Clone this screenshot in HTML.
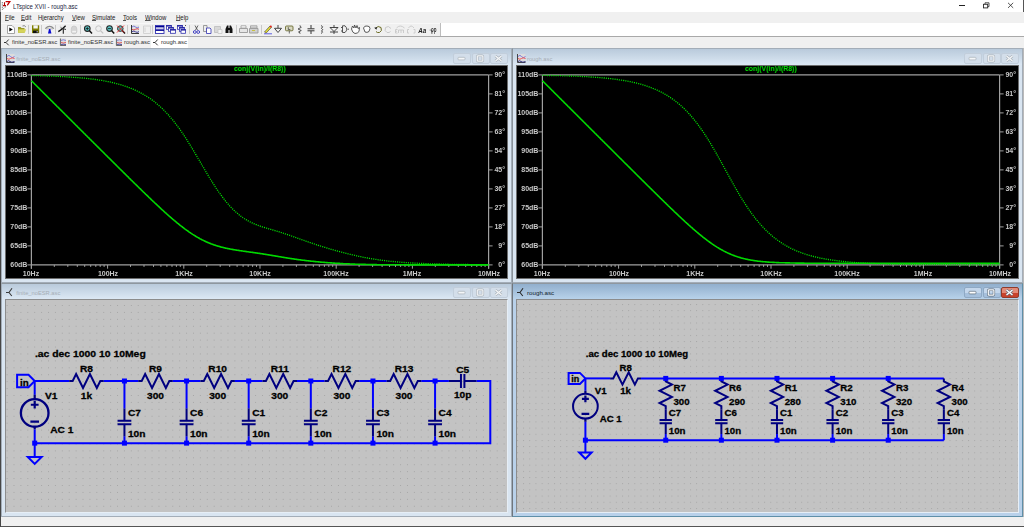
<!DOCTYPE html>
<html><head><meta charset="utf-8">
<style>
*{margin:0;padding:0;box-sizing:border-box}
html,body{width:1024px;height:527px;overflow:hidden;background:#f0f0f0;font-family:"Liberation Sans",sans-serif}
.a{position:absolute}
#title{left:0;top:0;width:1024px;height:12px;background:#fff}
#title .t{left:12.7px;top:1.5px;font-size:6.9px;color:#1a1a40;line-height:9px;white-space:nowrap;transform:scaleX(0.87);transform-origin:0 0}
#menu{left:0;top:12px;width:1024px;height:11px;background:#f0f0f0}
#menu u{text-decoration-thickness:0.6px;text-underline-offset:0.4px;text-decoration-color:#555}
#menu span{position:absolute;top:1px;font-size:7.5px;line-height:9px;color:#202020;transform:scaleX(0.8);transform-origin:0 0}
.tab{position:absolute;top:38px;font-size:5.9px;line-height:9px;color:#303030;white-space:nowrap}
.child{position:absolute;background:#d9e5f1;border:1px solid #a3adb8}
.ttl{position:absolute;background:linear-gradient(#b9cadb,#dce8f4)}
.act{background:#b9d1ea;border-color:#5f8fa8}
.act .ttl{background:linear-gradient(#91afcd,#b8d2ea)}
.ct{position:absolute;font-size:5.75px;line-height:8px;white-space:nowrap;color:#a6adb5}
.act .ct{color:#101c2c;font-size:6.2px}
.btn{position:absolute;width:18px;height:11px;border:1px solid #c2cedb;border-radius:2px;background:#d3deea}
.abtn{border-color:#8fa9c4;background:linear-gradient(#c4d7ec 50%,#a6c0dc 50%)}
.cbtn{border-color:#8e3b2c;background:linear-gradient(#e28a78 50%,#c8432d 50%)}
.plot{position:absolute;background:#000;border:1px solid #6c6c6c}
.sch{position:absolute;background:#c3c3c3;border:1px solid #8c8c8c;border-right-color:#e6eef6;border-bottom-color:#e6eef6}
.yl,.yr,.xl{will-change:transform;position:absolute;font-size:7px;line-height:10px;color:#c8c8c8;font-weight:bold;white-space:nowrap}
.yl,.yr{text-align:right}
.xl{width:40px;text-align:center}
.ov{position:absolute;left:0;top:0}
</style></head><body>
<div id="title" class="a">
 <svg class="a" style="left:0;top:0" width="12" height="12" viewBox="0 0 12 12"><path d="M2.3,2.3 V9.5 L7.5,5.3" stroke="#333" stroke-width="0.9" stroke-dasharray="1 1.2" fill="none"/><path d="M4.5,2.3 V5.6 M3,5.6 H6" stroke="#b00000" stroke-width="1.1" fill="none"/><path d="M5.6,1.6 H9.8 L7.4,5.2" stroke="#c00000" stroke-width="1.3" fill="none"/></svg>
 <div class="a t">LTspice XVII - rough.asc</div>
 <div class="a" style="left:959px;top:5px;width:6px;height:1px;background:#222"></div>
 <svg class="a" style="left:980px;top:0" width="12" height="12" viewBox="0 0 12 12"><rect x="3.5" y="4.3" width="4.2" height="3.6" fill="none" stroke="#2a2a2a" stroke-width="0.9"/><path d="M5,4.2 V2.8 H9 V6.6 H7.8" fill="none" stroke="#2a2a2a" stroke-width="0.8"/></svg>
 <svg class="a" style="left:1006px;top:1px" width="9" height="9" viewBox="0 0 9 9"><path d="M2,1.8 L7.2,6.9 M7.2,1.8 L2,6.9" stroke="#2a2a2a" stroke-width="0.8"/></svg>
</div>
<div id="menu" class="a">
 <span style="left:4.5px"><u>F</u>ile</span><span style="left:20.5px"><u>E</u>dit</span><span style="left:38px">H<u>i</u>erarchy</span><span style="left:72px"><u>V</u>iew</span><span style="left:92px"><u>S</u>imulate</span><span style="left:123px"><u>T</u>ools</span><span style="left:144.5px"><u>W</u>indow</span><span style="left:176px"><u>H</u>elp</span>
</div>
<div class="a" style="left:0;top:23px;width:441px;height:13px;background:#f0f0f0;border-top:1px solid #f8f8f8"></div>
<div class="a" style="left:441px;top:23px;width:583px;height:13px;background:#fff"></div>
<div class="a" style="left:0;top:36px;width:1024px;height:1px;background:#a9a9a9"></div>
<div class="a" style="left:0;top:37px;width:1024px;height:11px;background:#f0f0f0"></div>
<div class="a" style="left:151px;top:37px;width:37px;height:11px;background:#fff"></div>
<div class="tab" style="left:12px">finite_noESR.asc</div>
<div class="tab" style="left:68px">finite_noESR.asc</div>
<div class="tab" style="left:124px">rough.asc</div>
<div class="tab" style="left:161px">rough.asc</div>
<div class="a" style="left:0;top:48px;width:1024px;height:1px;background:#a8a8a8"></div>
<!-- MDI children -->
<div class="child" style="left:1px;top:48px;width:511px;height:235px">
 <div class="ttl" style="left:0;top:0;width:509px;height:16px"></div>
 <div class="ct" style="left:14.2px;top:6px">finite_noESR.asc</div>
 <div class="btn" style="left:451px;top:4px"></div><div class="btn" style="left:470px;top:4px"></div><div class="btn" style="left:488px;top:4px"></div>
</div>
<div class="plot" style="left:5px;top:65px;width:503px;height:214px"></div>
<div class="child" style="left:512px;top:48px;width:511px;height:235px;border-left-color:#8a9299">
 <div class="ttl" style="left:0;top:0;width:509px;height:16px"></div>
 <div class="ct" style="left:14px;top:6px">rough.asc</div>
 <div class="btn" style="left:451px;top:4px"></div><div class="btn" style="left:470px;top:4px"></div><div class="btn" style="left:488px;top:4px"></div>
</div>
<div class="plot" style="left:516px;top:65px;width:503px;height:214px"></div>
<div class="child" style="left:1px;top:283px;width:511px;height:234px;border-top-color:#8e979f">
 <div class="ttl" style="left:0;top:0;width:509px;height:15px"></div>
 <div class="ct" style="left:14.2px;top:5px">finite_noESR.asc</div>
 <div class="btn" style="left:451px;top:3px"></div><div class="btn" style="left:470px;top:3px"></div><div class="btn" style="left:488px;top:3px"></div>
</div>
<div class="sch" style="left:5px;top:299px;width:503px;height:214px"></div>
<div class="child act" style="left:512px;top:283px;width:511px;height:234px;border-left-color:#6f767d;border-top-color:#8e979f">
 <div class="ttl" style="left:0;top:0;width:509px;height:15px"></div>
 <div class="ct" style="left:14px;top:5px">rough.asc</div>
 <div class="btn abtn" style="left:451px;top:3px"></div><div class="btn abtn" style="left:470px;top:3px"></div><div class="btn cbtn" style="left:488px;top:3px"></div>
</div>
<div class="sch" style="left:516px;top:299px;width:503px;height:214px"></div>
<div class="a" style="left:1023px;top:48px;width:1px;height:469px;background:#bababa"></div>
<div class="a" style="left:0;top:517px;width:1024px;height:9px;background:#f0f0f0"></div>
<div class="a" style="left:0;top:526px;width:1024px;height:1px;background:#555"></div>
<div class="a" style="left:0;top:0;width:1px;height:527px;background:#464646"></div>
<div class="a" style="left:1023px;top:0;width:1px;height:12px;background:#555"></div>
<div class="a" style="left:0;top:0;width:1px;height:12px;background:#a0a0a0"></div>
<svg class="ov" width="1024" height="527" viewBox="0 0 1024 527">
<defs>
<pattern id="g1" x="34.20" y="381.15" width="6.903" height="6.923" patternUnits="userSpaceOnUse"><rect x="0" y="0" width="1" height="1" fill="#a6a6a6"/></pattern>
<pattern id="g2" x="584.90" y="378.16" width="6.18" height="6.18" patternUnits="userSpaceOnUse"><rect x="0" y="0" width="1" height="1" fill="#a6a6a6"/></pattern>
<clipPath id="c1"><rect x="6" y="66" width="501" height="212"/></clipPath>
<clipPath id="c2"><rect x="517" y="66" width="501" height="212"/></clipPath>
<clipPath id="c3"><rect x="6" y="300" width="501" height="212"/></clipPath>
<clipPath id="c4"><rect x="517" y="300" width="501" height="212"/></clipPath>
</defs>
<g clip-path="url(#c1)"><path d="M31.4,74.9 H488.6 M31.4,74.9 V268.7 M488.6,74.9 V268.7 M31.4,264.9 H488.6" stroke="#a0a0a0" stroke-width="1.2" fill="none"/>
<path d="M27.4,74.9 H31.4 M488.6,74.9 H492.6" stroke="#a0a0a0" stroke-width="1"/>
<path d="M27.4,93.9 H31.4 M488.6,93.9 H492.6" stroke="#a0a0a0" stroke-width="1"/>
<path d="M27.4,112.9 H31.4 M488.6,112.9 H492.6" stroke="#a0a0a0" stroke-width="1"/>
<path d="M27.4,131.9 H31.4 M488.6,131.9 H492.6" stroke="#a0a0a0" stroke-width="1"/>
<path d="M27.4,150.9 H31.4 M488.6,150.9 H492.6" stroke="#a0a0a0" stroke-width="1"/>
<path d="M27.4,169.9 H31.4 M488.6,169.9 H492.6" stroke="#a0a0a0" stroke-width="1"/>
<path d="M27.4,188.9 H31.4 M488.6,188.9 H492.6" stroke="#a0a0a0" stroke-width="1"/>
<path d="M27.4,207.9 H31.4 M488.6,207.9 H492.6" stroke="#a0a0a0" stroke-width="1"/>
<path d="M27.4,226.9 H31.4 M488.6,226.9 H492.6" stroke="#a0a0a0" stroke-width="1"/>
<path d="M27.4,245.9 H31.4 M488.6,245.9 H492.6" stroke="#a0a0a0" stroke-width="1"/>
<path d="M27.4,264.9 H31.4 M488.6,264.9 H492.6" stroke="#a0a0a0" stroke-width="1"/>
<path d="M54.3,264.9 V266.9" stroke="#a0a0a0" stroke-width="1"/>
<path d="M67.8,264.9 V266.9" stroke="#a0a0a0" stroke-width="1"/>
<path d="M77.3,264.9 V266.9" stroke="#a0a0a0" stroke-width="1"/>
<path d="M84.7,264.9 V266.9" stroke="#a0a0a0" stroke-width="1"/>
<path d="M90.7,264.9 V266.9" stroke="#a0a0a0" stroke-width="1"/>
<path d="M95.8,264.9 V266.9" stroke="#a0a0a0" stroke-width="1"/>
<path d="M100.2,264.9 V266.9" stroke="#a0a0a0" stroke-width="1"/>
<path d="M104.1,264.9 V266.9" stroke="#a0a0a0" stroke-width="1"/>
<path d="M130.5,264.9 V266.9" stroke="#a0a0a0" stroke-width="1"/>
<path d="M144.0,264.9 V266.9" stroke="#a0a0a0" stroke-width="1"/>
<path d="M153.5,264.9 V266.9" stroke="#a0a0a0" stroke-width="1"/>
<path d="M160.9,264.9 V266.9" stroke="#a0a0a0" stroke-width="1"/>
<path d="M166.9,264.9 V266.9" stroke="#a0a0a0" stroke-width="1"/>
<path d="M172.0,264.9 V266.9" stroke="#a0a0a0" stroke-width="1"/>
<path d="M176.4,264.9 V266.9" stroke="#a0a0a0" stroke-width="1"/>
<path d="M180.3,264.9 V266.9" stroke="#a0a0a0" stroke-width="1"/>
<path d="M206.7,264.9 V266.9" stroke="#a0a0a0" stroke-width="1"/>
<path d="M220.2,264.9 V266.9" stroke="#a0a0a0" stroke-width="1"/>
<path d="M229.7,264.9 V266.9" stroke="#a0a0a0" stroke-width="1"/>
<path d="M237.1,264.9 V266.9" stroke="#a0a0a0" stroke-width="1"/>
<path d="M243.1,264.9 V266.9" stroke="#a0a0a0" stroke-width="1"/>
<path d="M248.2,264.9 V266.9" stroke="#a0a0a0" stroke-width="1"/>
<path d="M252.6,264.9 V266.9" stroke="#a0a0a0" stroke-width="1"/>
<path d="M256.5,264.9 V266.9" stroke="#a0a0a0" stroke-width="1"/>
<path d="M282.9,264.9 V266.9" stroke="#a0a0a0" stroke-width="1"/>
<path d="M296.4,264.9 V266.9" stroke="#a0a0a0" stroke-width="1"/>
<path d="M305.9,264.9 V266.9" stroke="#a0a0a0" stroke-width="1"/>
<path d="M313.3,264.9 V266.9" stroke="#a0a0a0" stroke-width="1"/>
<path d="M319.3,264.9 V266.9" stroke="#a0a0a0" stroke-width="1"/>
<path d="M324.4,264.9 V266.9" stroke="#a0a0a0" stroke-width="1"/>
<path d="M328.8,264.9 V266.9" stroke="#a0a0a0" stroke-width="1"/>
<path d="M332.7,264.9 V266.9" stroke="#a0a0a0" stroke-width="1"/>
<path d="M359.1,264.9 V266.9" stroke="#a0a0a0" stroke-width="1"/>
<path d="M372.6,264.9 V266.9" stroke="#a0a0a0" stroke-width="1"/>
<path d="M382.1,264.9 V266.9" stroke="#a0a0a0" stroke-width="1"/>
<path d="M389.5,264.9 V266.9" stroke="#a0a0a0" stroke-width="1"/>
<path d="M395.5,264.9 V266.9" stroke="#a0a0a0" stroke-width="1"/>
<path d="M400.6,264.9 V266.9" stroke="#a0a0a0" stroke-width="1"/>
<path d="M405.0,264.9 V266.9" stroke="#a0a0a0" stroke-width="1"/>
<path d="M408.9,264.9 V266.9" stroke="#a0a0a0" stroke-width="1"/>
<path d="M435.3,264.9 V266.9" stroke="#a0a0a0" stroke-width="1"/>
<path d="M448.8,264.9 V266.9" stroke="#a0a0a0" stroke-width="1"/>
<path d="M458.3,264.9 V266.9" stroke="#a0a0a0" stroke-width="1"/>
<path d="M465.7,264.9 V266.9" stroke="#a0a0a0" stroke-width="1"/>
<path d="M471.7,264.9 V266.9" stroke="#a0a0a0" stroke-width="1"/>
<path d="M476.8,264.9 V266.9" stroke="#a0a0a0" stroke-width="1"/>
<path d="M481.2,264.9 V266.9" stroke="#a0a0a0" stroke-width="1"/>
<path d="M485.1,264.9 V266.9" stroke="#a0a0a0" stroke-width="1"/>
<path d="M31.4,264.9 V268.7" stroke="#a0a0a0" stroke-width="1"/>
<path d="M107.6,264.9 V268.7" stroke="#a0a0a0" stroke-width="1"/>
<path d="M183.8,264.9 V268.7" stroke="#a0a0a0" stroke-width="1"/>
<path d="M260.0,264.9 V268.7" stroke="#a0a0a0" stroke-width="1"/>
<path d="M336.2,264.9 V268.7" stroke="#a0a0a0" stroke-width="1"/>
<path d="M412.4,264.9 V268.7" stroke="#a0a0a0" stroke-width="1"/>
<path d="M488.6,264.9 V268.7" stroke="#a0a0a0" stroke-width="1"/>
<polyline points="31.4,80.7 31.8,81.1 32.2,81.5 32.5,81.8 32.9,82.2 33.3,82.6 33.7,83.0 34.1,83.4 34.5,83.7 34.8,84.1 35.2,84.5 35.6,84.9 36.0,85.3 36.4,85.7 36.7,86.0 37.1,86.4 37.5,86.8 37.9,87.2 38.3,87.6 38.6,87.9 39.0,88.3 39.4,88.7 39.8,89.1 40.2,89.5 40.6,89.8 40.9,90.2 41.3,90.6 41.7,91.0 42.1,91.4 42.5,91.7 42.8,92.1 43.2,92.5 43.6,92.9 44.0,93.3 44.4,93.6 44.7,94.0 45.1,94.4 45.5,94.8 45.9,95.2 46.3,95.5 46.7,95.9 47.0,96.3 47.4,96.7 47.8,97.1 48.2,97.4 48.6,97.8 48.9,98.2 49.3,98.6 49.7,99.0 50.1,99.3 50.5,99.7 50.8,100.1 51.2,100.5 51.6,100.9 52.0,101.2 52.4,101.6 52.8,102.0 53.1,102.4 53.5,102.8 53.9,103.1 54.3,103.5 54.7,103.9 55.0,104.3 55.4,104.7 55.8,105.0 56.2,105.4 56.6,105.8 56.9,106.2 57.3,106.6 57.7,106.9 58.1,107.3 58.5,107.7 58.9,108.1 59.2,108.5 59.6,108.8 60.0,109.2 60.4,109.6 60.8,110.0 61.1,110.4 61.5,110.7 61.9,111.1 62.3,111.5 62.7,111.9 63.0,112.3 63.4,112.6 63.8,113.0 64.2,113.4 64.6,113.8 65.0,114.2 65.3,114.6 65.7,114.9 66.1,115.3 66.5,115.7 66.9,116.1 67.2,116.5 67.6,116.8 68.0,117.2 68.4,117.6 68.8,118.0 69.2,118.4 69.5,118.7 69.9,119.1 70.3,119.5 70.7,119.9 71.1,120.3 71.4,120.6 71.8,121.0 72.2,121.4 72.6,121.8 73.0,122.2 73.3,122.5 73.7,122.9 74.1,123.3 74.5,123.7 74.9,124.1 75.3,124.4 75.6,124.8 76.0,125.2 76.4,125.6 76.8,126.0 77.2,126.3 77.5,126.7 77.9,127.1 78.3,127.5 78.7,127.9 79.1,128.2 79.4,128.6 79.8,129.0 80.2,129.4 80.6,129.8 81.0,130.1 81.4,130.5 81.7,130.9 82.1,131.3 82.5,131.7 82.9,132.0 83.3,132.4 83.6,132.8 84.0,133.2 84.4,133.6 84.8,133.9 85.2,134.3 85.5,134.7 85.9,135.1 86.3,135.5 86.7,135.8 87.1,136.2 87.5,136.6 87.8,137.0 88.2,137.4 88.6,137.7 89.0,138.1 89.4,138.5 89.7,138.9 90.1,139.3 90.5,139.6 90.9,140.0 91.3,140.4 91.6,140.8 92.0,141.2 92.4,141.5 92.8,141.9 93.2,142.3 93.6,142.7 93.9,143.1 94.3,143.4 94.7,143.8 95.1,144.2 95.5,144.6 95.8,145.0 96.2,145.3 96.6,145.7 97.0,146.1 97.4,146.5 97.7,146.9 98.1,147.2 98.5,147.6 98.9,148.0 99.3,148.4 99.7,148.8 100.0,149.1 100.4,149.5 100.8,149.9 101.2,150.3 101.6,150.6 101.9,151.0 102.3,151.4 102.7,151.8 103.1,152.2 103.5,152.5 103.9,152.9 104.2,153.3 104.6,153.7 105.0,154.1 105.4,154.4 105.8,154.8 106.1,155.2 106.5,155.6 106.9,156.0 107.3,156.3 107.7,156.7 108.0,157.1 108.4,157.5 108.8,157.9 109.2,158.2 109.6,158.6 110.0,159.0 110.3,159.4 110.7,159.7 111.1,160.1 111.5,160.5 111.9,160.9 112.2,161.3 112.6,161.6 113.0,162.0 113.4,162.4 113.8,162.8 114.1,163.2 114.5,163.5 114.9,163.9 115.3,164.3 115.7,164.7 116.1,165.0 116.4,165.4 116.8,165.8 117.2,166.2 117.6,166.6 118.0,166.9 118.3,167.3 118.7,167.7 119.1,168.1 119.5,168.5 119.9,168.8 120.2,169.2 120.6,169.6 121.0,170.0 121.4,170.3 121.8,170.7 122.2,171.1 122.5,171.5 122.9,171.8 123.3,172.2 123.7,172.6 124.1,173.0 124.4,173.4 124.8,173.7 125.2,174.1 125.6,174.5 126.0,174.9 126.3,175.2 126.7,175.6 127.1,176.0 127.5,176.4 127.9,176.7 128.3,177.1 128.6,177.5 129.0,177.9 129.4,178.3 129.8,178.6 130.2,179.0 130.5,179.4 130.9,179.8 131.3,180.1 131.7,180.5 132.1,180.9 132.4,181.3 132.8,181.6 133.2,182.0 133.6,182.4 134.0,182.8 134.4,183.1 134.7,183.5 135.1,183.9 135.5,184.2 135.9,184.6 136.3,185.0 136.6,185.4 137.0,185.7 137.4,186.1 137.8,186.5 138.2,186.9 138.6,187.2 138.9,187.6 139.3,188.0 139.7,188.4 140.1,188.7 140.5,189.1 140.8,189.5 141.2,189.8 141.6,190.2 142.0,190.6 142.4,191.0 142.7,191.3 143.1,191.7 143.5,192.1 143.9,192.4 144.3,192.8 144.7,193.2 145.0,193.5 145.4,193.9 145.8,194.3 146.2,194.6 146.6,195.0 146.9,195.4 147.3,195.7 147.7,196.1 148.1,196.5 148.5,196.8 148.8,197.2 149.2,197.6 149.6,197.9 150.0,198.3 150.4,198.7 150.8,199.0 151.1,199.4 151.5,199.8 151.9,200.1 152.3,200.5 152.7,200.9 153.0,201.2 153.4,201.6 153.8,201.9 154.2,202.3 154.6,202.7 154.9,203.0 155.3,203.4 155.7,203.7 156.1,204.1 156.5,204.5 156.9,204.8 157.2,205.2 157.6,205.5 158.0,205.9 158.4,206.2 158.8,206.6 159.1,207.0 159.5,207.3 159.9,207.7 160.3,208.0 160.7,208.4 161.0,208.7 161.4,209.1 161.8,209.4 162.2,209.8 162.6,210.1 163.0,210.5 163.3,210.8 163.7,211.2 164.1,211.5 164.5,211.9 164.9,212.2 165.2,212.6 165.6,212.9 166.0,213.2 166.4,213.6 166.8,213.9 167.1,214.3 167.5,214.6 167.9,214.9 168.3,215.3 168.7,215.6 169.1,216.0 169.4,216.3 169.8,216.6 170.2,217.0 170.6,217.3 171.0,217.6 171.3,218.0 171.7,218.3 172.1,218.6 172.5,218.9 172.9,219.3 173.3,219.6 173.6,219.9 174.0,220.2 174.4,220.6 174.8,220.9 175.2,221.2 175.5,221.5 175.9,221.8 176.3,222.2 176.7,222.5 177.1,222.8 177.4,223.1 177.8,223.4 178.2,223.7 178.6,224.0 179.0,224.3 179.4,224.6 179.7,224.9 180.1,225.3 180.5,225.6 180.9,225.9 181.3,226.2 181.6,226.4 182.0,226.7 182.4,227.0 182.8,227.3 183.2,227.6 183.5,227.9 183.9,228.2 184.3,228.5 184.7,228.8 185.1,229.1 185.5,229.3 185.8,229.6 186.2,229.9 186.6,230.2 187.0,230.4 187.4,230.7 187.7,231.0 188.1,231.3 188.5,231.5 188.9,231.8 189.3,232.1 189.6,232.3 190.0,232.6 190.4,232.8 190.8,233.1 191.2,233.4 191.6,233.6 191.9,233.9 192.3,234.1 192.7,234.4 193.1,234.6 193.5,234.8 193.8,235.1 194.2,235.3 194.6,235.6 195.0,235.8 195.4,236.0 195.7,236.3 196.1,236.5 196.5,236.7 196.9,236.9 197.3,237.2 197.7,237.4 198.0,237.6 198.4,237.8 198.8,238.0 199.2,238.2 199.6,238.5 199.9,238.7 200.3,238.9 200.7,239.1 201.1,239.3 201.5,239.5 201.8,239.7 202.2,239.9 202.6,240.1 203.0,240.2 203.4,240.4 203.8,240.6 204.1,240.8 204.5,241.0 204.9,241.2 205.3,241.3 205.7,241.5 206.0,241.7 206.4,241.9 206.8,242.0 207.2,242.2 207.6,242.4 208.0,242.5 208.3,242.7 208.7,242.8 209.1,243.0 209.5,243.2 209.9,243.3 210.2,243.5 210.6,243.6 211.0,243.8 211.4,243.9 211.8,244.1 212.1,244.2 212.5,244.3 212.9,244.5 213.3,244.6 213.7,244.7 214.1,244.9 214.4,245.0 214.8,245.1 215.2,245.3 215.6,245.4 216.0,245.5 216.3,245.6 216.7,245.7 217.1,245.9 217.5,246.0 217.9,246.1 218.2,246.2 218.6,246.3 219.0,246.4 219.4,246.5 219.8,246.6 220.2,246.7 220.5,246.9 220.9,247.0 221.3,247.1 221.7,247.2 222.1,247.2 222.4,247.3 222.8,247.4 223.2,247.5 223.6,247.6 224.0,247.7 224.3,247.8 224.7,247.9 225.1,248.0 225.5,248.1 225.9,248.2 226.3,248.2 226.6,248.3 227.0,248.4 227.4,248.5 227.8,248.6 228.2,248.6 228.5,248.7 228.9,248.8 229.3,248.9 229.7,248.9 230.1,249.0 230.4,249.1 230.8,249.2 231.2,249.2 231.6,249.3 232.0,249.4 232.4,249.4 232.7,249.5 233.1,249.6 233.5,249.6 233.9,249.7 234.3,249.8 234.6,249.8 235.0,249.9 235.4,250.0 235.8,250.0 236.2,250.1 236.5,250.1 236.9,250.2 237.3,250.3 237.7,250.3 238.1,250.4 238.5,250.4 238.8,250.5 239.2,250.5 239.6,250.6 240.0,250.7 240.4,250.7 240.7,250.8 241.1,250.8 241.5,250.9 241.9,250.9 242.3,251.0 242.7,251.0 243.0,251.1 243.4,251.2 243.8,251.2 244.2,251.3 244.6,251.3 244.9,251.4 245.3,251.4 245.7,251.5 246.1,251.5 246.5,251.6 246.8,251.6 247.2,251.7 247.6,251.7 248.0,251.8 248.4,251.8 248.8,251.9 249.1,252.0 249.5,252.0 249.9,252.1 250.3,252.1 250.7,252.2 251.0,252.2 251.4,252.3 251.8,252.3 252.2,252.4 252.6,252.4 252.9,252.5 253.3,252.5 253.7,252.6 254.1,252.6 254.5,252.7 254.9,252.7 255.2,252.8 255.6,252.9 256.0,252.9 256.4,253.0 256.8,253.0 257.1,253.1 257.5,253.1 257.9,253.2 258.3,253.2 258.7,253.3 259.0,253.4 259.4,253.4 259.8,253.5 260.2,253.5 260.6,253.6 261.0,253.6 261.3,253.7 261.7,253.8 262.1,253.8 262.5,253.9 262.9,253.9 263.2,254.0 263.6,254.1 264.0,254.1 264.4,254.2 264.8,254.2 265.1,254.3 265.5,254.4 265.9,254.4 266.3,254.5 266.7,254.5 267.1,254.6 267.4,254.7 267.8,254.7 268.2,254.8 268.6,254.9 269.0,254.9 269.3,255.0 269.7,255.0 270.1,255.1 270.5,255.2 270.9,255.2 271.2,255.3 271.6,255.4 272.0,255.4 272.4,255.5 272.8,255.6 273.2,255.6 273.5,255.7 273.9,255.7 274.3,255.8 274.7,255.9 275.1,255.9 275.4,256.0 275.8,256.1 276.2,256.1 276.6,256.2 277.0,256.3 277.3,256.3 277.7,256.4 278.1,256.5 278.5,256.5 278.9,256.6 279.3,256.7 279.6,256.7 280.0,256.8 280.4,256.8 280.8,256.9 281.2,257.0 281.5,257.0 281.9,257.1 282.3,257.2 282.7,257.2 283.1,257.3 283.5,257.4 283.8,257.4 284.2,257.5 284.6,257.5 285.0,257.6 285.4,257.7 285.7,257.7 286.1,257.8 286.5,257.9 286.9,257.9 287.3,258.0 287.6,258.0 288.0,258.1 288.4,258.2 288.8,258.2 289.2,258.3 289.6,258.3 289.9,258.4 290.3,258.5 290.7,258.5 291.1,258.6 291.5,258.6 291.8,258.7 292.2,258.7 292.6,258.8 293.0,258.9 293.4,258.9 293.7,259.0 294.1,259.0 294.5,259.1 294.9,259.1 295.3,259.2 295.7,259.2 296.0,259.3 296.4,259.4 296.8,259.4 297.2,259.5 297.6,259.5 297.9,259.6 298.3,259.6 298.7,259.7 299.1,259.7 299.5,259.8 299.8,259.8 300.2,259.9 300.6,259.9 301.0,260.0 301.4,260.0 301.8,260.1 302.1,260.1 302.5,260.2 302.9,260.2 303.3,260.3 303.7,260.3 304.0,260.3 304.4,260.4 304.8,260.4 305.2,260.5 305.6,260.5 305.9,260.6 306.3,260.6 306.7,260.7 307.1,260.7 307.5,260.8 307.9,260.8 308.2,260.8 308.6,260.9 309.0,260.9 309.4,261.0 309.8,261.0 310.1,261.0 310.5,261.1 310.9,261.1 311.3,261.2 311.7,261.2 312.0,261.3 312.4,261.3 312.8,261.3 313.2,261.4 313.6,261.4 314.0,261.4 314.3,261.5 314.7,261.5 315.1,261.6 315.5,261.6 315.9,261.6 316.2,261.7 316.6,261.7 317.0,261.7 317.4,261.8 317.8,261.8 318.2,261.9 318.5,261.9 318.9,261.9 319.3,262.0 319.7,262.0 320.1,262.0 320.4,262.1 320.8,262.1 321.2,262.1 321.6,262.2 322.0,262.2 322.3,262.2 322.7,262.3 323.1,262.3 323.5,262.3 323.9,262.4 324.3,262.4 324.6,262.4 325.0,262.5 325.4,262.5 325.8,262.5 326.2,262.5 326.5,262.6 326.9,262.6 327.3,262.6 327.7,262.7 328.1,262.7 328.4,262.7 328.8,262.7 329.2,262.8 329.6,262.8 330.0,262.8 330.4,262.9 330.7,262.9 331.1,262.9 331.5,262.9 331.9,263.0 332.3,263.0 332.6,263.0 333.0,263.0 333.4,263.1 333.8,263.1 334.2,263.1 334.5,263.1 334.9,263.2 335.3,263.2 335.7,263.2 336.1,263.2 336.5,263.3 336.8,263.3 337.2,263.3 337.6,263.3 338.0,263.4 338.4,263.4 338.7,263.4 339.1,263.4 339.5,263.4 339.9,263.5 340.3,263.5 340.6,263.5 341.0,263.5 341.4,263.6 341.8,263.6 342.2,263.6 342.6,263.6 342.9,263.6 343.3,263.7 343.7,263.7 344.1,263.7 344.5,263.7 344.8,263.7 345.2,263.7 345.6,263.8 346.0,263.8 346.4,263.8 346.7,263.8 347.1,263.8 347.5,263.9 347.9,263.9 348.3,263.9 348.7,263.9 349.0,263.9 349.4,263.9 349.8,264.0 350.2,264.0 350.6,264.0 350.9,264.0 351.3,264.0 351.7,264.0 352.1,264.0 352.5,264.1 352.9,264.1 353.2,264.1 353.6,264.1 354.0,264.1 354.4,264.1 354.8,264.1 355.1,264.2 355.5,264.2 355.9,264.2 356.3,264.2 356.7,264.2 357.0,264.2 357.4,264.2 357.8,264.2 358.2,264.3 358.6,264.3 359.0,264.3 359.3,264.3 359.7,264.3 360.1,264.3 360.5,264.3 360.9,264.3 361.2,264.3 361.6,264.4 362.0,264.4 362.4,264.4 362.8,264.4 363.1,264.4 363.5,264.4 363.9,264.4 364.3,264.4 364.7,264.4 365.1,264.4 365.4,264.4 365.8,264.5 366.2,264.5 366.6,264.5 367.0,264.5 367.3,264.5 367.7,264.5 368.1,264.5 368.5,264.5 368.9,264.5 369.2,264.5 369.6,264.5 370.0,264.5 370.4,264.6 370.8,264.6 371.2,264.6 371.5,264.6 371.9,264.6 372.3,264.6 372.7,264.6 373.1,264.6 373.4,264.6 373.8,264.6 374.2,264.6 374.6,264.6 375.0,264.6 375.3,264.6 375.7,264.6 376.1,264.6 376.5,264.6 376.9,264.7 377.3,264.7 377.6,264.7 378.0,264.7 378.4,264.7 378.8,264.7 379.2,264.7 379.5,264.7 379.9,264.7 380.3,264.7 380.7,264.7 381.1,264.7 381.4,264.7 381.8,264.7 382.2,264.7 382.6,264.7 383.0,264.7 383.4,264.7 383.7,264.7 384.1,264.7 384.5,264.7 384.9,264.7 385.3,264.7 385.6,264.7 386.0,264.8 386.4,264.8 386.8,264.8 387.2,264.8 387.6,264.8 387.9,264.8 388.3,264.8 388.7,264.8 389.1,264.8 389.5,264.8 389.8,264.8 390.2,264.8 390.6,264.8 391.0,264.8 391.4,264.8 391.7,264.8 392.1,264.8 392.5,264.8 392.9,264.8 393.3,264.8 393.7,264.8 394.0,264.8 394.4,264.8 394.8,264.8 395.2,264.8 395.6,264.8 395.9,264.8 396.3,264.8 396.7,264.8 397.1,264.8 397.5,264.8 397.8,264.8 398.2,264.8 398.6,264.8 399.0,264.8 399.4,264.8 399.8,264.8 400.1,264.8 400.5,264.8 400.9,264.8 401.3,264.8 401.7,264.8 402.0,264.8 402.4,264.8 402.8,264.8 403.2,264.8 403.6,264.8 403.9,264.8 404.3,264.8 404.7,264.9 405.1,264.9 405.5,264.9 405.9,264.9 406.2,264.9 406.6,264.9 407.0,264.9 407.4,264.9 407.8,264.9 408.1,264.9 408.5,264.9 408.9,264.9 409.3,264.9 409.7,264.9 410.0,264.9 410.4,264.9 410.8,264.9 411.2,264.9 411.6,264.9 412.0,264.9 412.3,264.9 412.7,264.9 413.1,264.9 413.5,264.9 413.9,264.9 414.2,264.9 414.6,264.9 415.0,264.9 415.4,264.9 415.8,264.9 416.1,264.9 416.5,264.9 416.9,264.9 417.3,264.9 417.7,264.9 418.1,264.9 418.4,264.9 418.8,264.9 419.2,264.9 419.6,264.9 420.0,264.9 420.3,264.9 420.7,264.9 421.1,264.9 421.5,264.9 421.9,264.9 422.3,264.9 422.6,264.9 423.0,264.9 423.4,264.9 423.8,264.9 424.2,264.9 424.5,264.9 424.9,264.9 425.3,264.9 425.7,264.9 426.1,264.9 426.4,264.9 426.8,264.9 427.2,264.9 427.6,264.9 428.0,264.9 428.4,264.9 428.7,264.9 429.1,264.9 429.5,264.9 429.9,264.9 430.3,264.9 430.6,264.9 431.0,264.9 431.4,264.9 431.8,264.9 432.2,264.9 432.5,264.9 432.9,264.9 433.3,264.9 433.7,264.9 434.1,264.9 434.5,264.9 434.8,264.9 435.2,264.9 435.6,264.9 436.0,264.9 436.4,264.9 436.7,264.9 437.1,264.9 437.5,264.9 437.9,264.9 438.3,264.9 438.6,264.9 439.0,264.9 439.4,264.9 439.8,264.9 440.2,264.9 440.6,264.9 440.9,264.9 441.3,264.9 441.7,264.9 442.1,264.9 442.5,264.9 442.8,264.9 443.2,264.9 443.6,264.9 444.0,264.9 444.4,264.9 444.7,264.9 445.1,264.9 445.5,264.9 445.9,264.9 446.3,264.9 446.7,264.9 447.0,264.9 447.4,264.9 447.8,264.9 448.2,264.9 448.6,264.9 448.9,264.9 449.3,264.9 449.7,264.9 450.1,264.9 450.5,264.9 450.8,264.9 451.2,264.9 451.6,264.9 452.0,264.9 452.4,264.9 452.8,264.9 453.1,264.9 453.5,264.9 453.9,264.9 454.3,264.9 454.7,264.9 455.0,264.9 455.4,264.9 455.8,264.9 456.2,264.9 456.6,264.9 457.0,264.9 457.3,264.9 457.7,264.9 458.1,264.9 458.5,264.9 458.9,264.9 459.2,264.9 459.6,264.9 460.0,264.9 460.4,264.9 460.8,264.9 461.1,264.9 461.5,264.9 461.9,264.9 462.3,264.9 462.7,264.9 463.1,264.9 463.4,264.9 463.8,264.9 464.2,264.9 464.6,264.9 465.0,264.9 465.3,264.9 465.7,264.9 466.1,264.9 466.5,264.9 466.9,264.9 467.2,264.9 467.6,264.9 468.0,264.9 468.4,264.9 468.8,264.9 469.2,264.9 469.5,264.9 469.9,264.9 470.3,264.9 470.7,264.9 471.1,264.9 471.4,264.9 471.8,264.9 472.2,264.9 472.6,264.9 473.0,264.9 473.3,264.9 473.7,264.9 474.1,264.9 474.5,264.9 474.9,264.9 475.3,264.9 475.6,264.9 476.0,264.9 476.4,264.9 476.8,264.9 477.2,264.9 477.5,264.9 477.9,264.9 478.3,264.9 478.7,264.9 479.1,264.9 479.4,264.9 479.8,264.9 480.2,264.9 480.6,264.9 481.0,264.9 481.4,264.9 481.7,264.9 482.1,264.9 482.5,264.9 482.9,264.9 483.3,264.9 483.6,264.9 484.0,264.9 484.4,264.9 484.8,264.9 485.2,264.9 485.5,264.9 485.9,264.9 486.3,264.9 486.7,264.9 487.1,264.9 487.5,264.9 487.8,264.9 488.2,264.9 488.6,264.9" fill="none" stroke="#00d800" stroke-width="1.6"/>
<polyline points="31.4,75.6 31.8,75.6 32.2,75.6 32.5,75.6 32.9,75.6 33.3,75.6 33.7,75.6 34.1,75.6 34.5,75.6 34.8,75.6 35.2,75.6 35.6,75.7 36.0,75.7 36.4,75.7 36.7,75.7 37.1,75.7 37.5,75.7 37.9,75.7 38.3,75.7 38.6,75.7 39.0,75.7 39.4,75.7 39.8,75.8 40.2,75.8 40.6,75.8 40.9,75.8 41.3,75.8 41.7,75.8 42.1,75.8 42.5,75.8 42.8,75.8 43.2,75.9 43.6,75.9 44.0,75.9 44.4,75.9 44.7,75.9 45.1,75.9 45.5,75.9 45.9,75.9 46.3,75.9 46.7,76.0 47.0,76.0 47.4,76.0 47.8,76.0 48.2,76.0 48.6,76.0 48.9,76.0 49.3,76.0 49.7,76.1 50.1,76.1 50.5,76.1 50.8,76.1 51.2,76.1 51.6,76.1 52.0,76.1 52.4,76.2 52.8,76.2 53.1,76.2 53.5,76.2 53.9,76.2 54.3,76.2 54.7,76.2 55.0,76.3 55.4,76.3 55.8,76.3 56.2,76.3 56.6,76.3 56.9,76.3 57.3,76.4 57.7,76.4 58.1,76.4 58.5,76.4 58.9,76.4 59.2,76.4 59.6,76.5 60.0,76.5 60.4,76.5 60.8,76.5 61.1,76.5 61.5,76.6 61.9,76.6 62.3,76.6 62.7,76.6 63.0,76.6 63.4,76.7 63.8,76.7 64.2,76.7 64.6,76.7 65.0,76.7 65.3,76.8 65.7,76.8 66.1,76.8 66.5,76.8 66.9,76.8 67.2,76.9 67.6,76.9 68.0,76.9 68.4,76.9 68.8,77.0 69.2,77.0 69.5,77.0 69.9,77.0 70.3,77.1 70.7,77.1 71.1,77.1 71.4,77.1 71.8,77.2 72.2,77.2 72.6,77.2 73.0,77.2 73.3,77.3 73.7,77.3 74.1,77.3 74.5,77.3 74.9,77.4 75.3,77.4 75.6,77.4 76.0,77.5 76.4,77.5 76.8,77.5 77.2,77.6 77.5,77.6 77.9,77.6 78.3,77.6 78.7,77.7 79.1,77.7 79.4,77.7 79.8,77.8 80.2,77.8 80.6,77.8 81.0,77.9 81.4,77.9 81.7,77.9 82.1,78.0 82.5,78.0 82.9,78.1 83.3,78.1 83.6,78.1 84.0,78.2 84.4,78.2 84.8,78.2 85.2,78.3 85.5,78.3 85.9,78.4 86.3,78.4 86.7,78.4 87.1,78.5 87.5,78.5 87.8,78.6 88.2,78.6 88.6,78.6 89.0,78.7 89.4,78.7 89.7,78.8 90.1,78.8 90.5,78.9 90.9,78.9 91.3,79.0 91.6,79.0 92.0,79.1 92.4,79.1 92.8,79.2 93.2,79.2 93.6,79.2 93.9,79.3 94.3,79.4 94.7,79.4 95.1,79.5 95.5,79.5 95.8,79.6 96.2,79.6 96.6,79.7 97.0,79.7 97.4,79.8 97.7,79.8 98.1,79.9 98.5,80.0 98.9,80.0 99.3,80.1 99.7,80.1 100.0,80.2 100.4,80.3 100.8,80.3 101.2,80.4 101.6,80.4 101.9,80.5 102.3,80.6 102.7,80.6 103.1,80.7 103.5,80.8 103.9,80.8 104.2,80.9 104.6,81.0 105.0,81.0 105.4,81.1 105.8,81.2 106.1,81.3 106.5,81.3 106.9,81.4 107.3,81.5 107.7,81.6 108.0,81.6 108.4,81.7 108.8,81.8 109.2,81.9 109.6,82.0 110.0,82.0 110.3,82.1 110.7,82.2 111.1,82.3 111.5,82.4 111.9,82.5 112.2,82.5 112.6,82.6 113.0,82.7 113.4,82.8 113.8,82.9 114.1,83.0 114.5,83.1 114.9,83.2 115.3,83.3 115.7,83.4 116.1,83.5 116.4,83.6 116.8,83.7 117.2,83.8 117.6,83.9 118.0,84.0 118.3,84.1 118.7,84.2 119.1,84.3 119.5,84.4 119.9,84.5 120.2,84.6 120.6,84.7 121.0,84.8 121.4,85.0 121.8,85.1 122.2,85.2 122.5,85.3 122.9,85.4 123.3,85.6 123.7,85.7 124.1,85.8 124.4,85.9 124.8,86.1 125.2,86.2 125.6,86.3 126.0,86.4 126.3,86.6 126.7,86.7 127.1,86.9 127.5,87.0 127.9,87.1 128.3,87.3 128.6,87.4 129.0,87.6 129.4,87.7 129.8,87.8 130.2,88.0 130.5,88.1 130.9,88.3 131.3,88.5 131.7,88.6 132.1,88.8 132.4,88.9 132.8,89.1 133.2,89.2 133.6,89.4 134.0,89.6 134.4,89.7 134.7,89.9 135.1,90.1 135.5,90.3 135.9,90.4 136.3,90.6 136.6,90.8 137.0,91.0 137.4,91.2 137.8,91.3 138.2,91.5 138.6,91.7 138.9,91.9 139.3,92.1 139.7,92.3 140.1,92.5 140.5,92.7 140.8,92.9 141.2,93.1 141.6,93.3 142.0,93.5 142.4,93.7 142.7,94.0 143.1,94.2 143.5,94.4 143.9,94.6 144.3,94.8 144.7,95.1 145.0,95.3 145.4,95.5 145.8,95.8 146.2,96.0 146.6,96.2 146.9,96.5 147.3,96.7 147.7,97.0 148.1,97.2 148.5,97.5 148.8,97.7 149.2,98.0 149.6,98.2 150.0,98.5 150.4,98.8 150.8,99.0 151.1,99.3 151.5,99.6 151.9,99.9 152.3,100.1 152.7,100.4 153.0,100.7 153.4,101.0 153.8,101.3 154.2,101.6 154.6,101.9 154.9,102.2 155.3,102.5 155.7,102.8 156.1,103.1 156.5,103.4 156.9,103.7 157.2,104.1 157.6,104.4 158.0,104.7 158.4,105.0 158.8,105.4 159.1,105.7 159.5,106.1 159.9,106.4 160.3,106.7 160.7,107.1 161.0,107.4 161.4,107.8 161.8,108.2 162.2,108.5 162.6,108.9 163.0,109.3 163.3,109.6 163.7,110.0 164.1,110.4 164.5,110.8 164.9,111.2 165.2,111.6 165.6,112.0 166.0,112.4 166.4,112.8 166.8,113.2 167.1,113.6 167.5,114.0 167.9,114.4 168.3,114.8 168.7,115.3 169.1,115.7 169.4,116.1 169.8,116.6 170.2,117.0 170.6,117.4 171.0,117.9 171.3,118.3 171.7,118.8 172.1,119.3 172.5,119.7 172.9,120.2 173.3,120.7 173.6,121.1 174.0,121.6 174.4,122.1 174.8,122.6 175.2,123.1 175.5,123.6 175.9,124.1 176.3,124.6 176.7,125.1 177.1,125.6 177.4,126.1 177.8,126.6 178.2,127.1 178.6,127.6 179.0,128.2 179.4,128.7 179.7,129.2 180.1,129.8 180.5,130.3 180.9,130.9 181.3,131.4 181.6,132.0 182.0,132.5 182.4,133.1 182.8,133.6 183.2,134.2 183.5,134.8 183.9,135.3 184.3,135.9 184.7,136.5 185.1,137.1 185.5,137.7 185.8,138.3 186.2,138.8 186.6,139.4 187.0,140.0 187.4,140.6 187.7,141.2 188.1,141.8 188.5,142.4 188.9,143.1 189.3,143.7 189.6,144.3 190.0,144.9 190.4,145.5 190.8,146.1 191.2,146.8 191.6,147.4 191.9,148.0 192.3,148.6 192.7,149.3 193.1,149.9 193.5,150.5 193.8,151.2 194.2,151.8 194.6,152.5 195.0,153.1 195.4,153.7 195.7,154.4 196.1,155.0 196.5,155.7 196.9,156.3 197.3,157.0 197.7,157.6 198.0,158.3 198.4,158.9 198.8,159.6 199.2,160.2 199.6,160.9 199.9,161.5 200.3,162.2 200.7,162.8 201.1,163.5 201.5,164.1 201.8,164.8 202.2,165.4 202.6,166.1 203.0,166.7 203.4,167.4 203.8,168.0 204.1,168.7 204.5,169.3 204.9,170.0 205.3,170.6 205.7,171.3 206.0,171.9 206.4,172.5 206.8,173.2 207.2,173.8 207.6,174.4 208.0,175.1 208.3,175.7 208.7,176.3 209.1,177.0 209.5,177.6 209.9,178.2 210.2,178.8 210.6,179.5 211.0,180.1 211.4,180.7 211.8,181.3 212.1,181.9 212.5,182.5 212.9,183.1 213.3,183.7 213.7,184.3 214.1,184.9 214.4,185.5 214.8,186.1 215.2,186.7 215.6,187.2 216.0,187.8 216.3,188.4 216.7,189.0 217.1,189.5 217.5,190.1 217.9,190.7 218.2,191.2 218.6,191.8 219.0,192.3 219.4,192.9 219.8,193.4 220.2,193.9 220.5,194.5 220.9,195.0 221.3,195.5 221.7,196.0 222.1,196.5 222.4,197.0 222.8,197.5 223.2,198.0 223.6,198.5 224.0,199.0 224.3,199.5 224.7,200.0 225.1,200.5 225.5,201.0 225.9,201.4 226.3,201.9 226.6,202.4 227.0,202.8 227.4,203.3 227.8,203.7 228.2,204.1 228.5,204.6 228.9,205.0 229.3,205.4 229.7,205.9 230.1,206.3 230.4,206.7 230.8,207.1 231.2,207.5 231.6,207.9 232.0,208.3 232.4,208.7 232.7,209.1 233.1,209.4 233.5,209.8 233.9,210.2 234.3,210.6 234.6,210.9 235.0,211.3 235.4,211.6 235.8,212.0 236.2,212.3 236.5,212.7 236.9,213.0 237.3,213.3 237.7,213.6 238.1,214.0 238.5,214.3 238.8,214.6 239.2,214.9 239.6,215.2 240.0,215.5 240.4,215.8 240.7,216.1 241.1,216.4 241.5,216.6 241.9,216.9 242.3,217.2 242.7,217.5 243.0,217.7 243.4,218.0 243.8,218.2 244.2,218.5 244.6,218.7 244.9,219.0 245.3,219.2 245.7,219.4 246.1,219.7 246.5,219.9 246.8,220.1 247.2,220.4 247.6,220.6 248.0,220.8 248.4,221.0 248.8,221.2 249.1,221.4 249.5,221.6 249.9,221.8 250.3,222.0 250.7,222.2 251.0,222.4 251.4,222.6 251.8,222.8 252.2,222.9 252.6,223.1 252.9,223.3 253.3,223.5 253.7,223.6 254.1,223.8 254.5,223.9 254.9,224.1 255.2,224.3 255.6,224.4 256.0,224.6 256.4,224.7 256.8,224.9 257.1,225.0 257.5,225.2 257.9,225.3 258.3,225.5 258.7,225.6 259.0,225.7 259.4,225.9 259.8,226.0 260.2,226.1 260.6,226.3 261.0,226.4 261.3,226.5 261.7,226.6 262.1,226.8 262.5,226.9 262.9,227.0 263.2,227.1 263.6,227.3 264.0,227.4 264.4,227.5 264.8,227.6 265.1,227.7 265.5,227.8 265.9,228.0 266.3,228.1 266.7,228.2 267.1,228.3 267.4,228.4 267.8,228.5 268.2,228.6 268.6,228.8 269.0,228.9 269.3,229.0 269.7,229.1 270.1,229.2 270.5,229.3 270.9,229.4 271.2,229.5 271.6,229.6 272.0,229.8 272.4,229.9 272.8,230.0 273.2,230.1 273.5,230.2 273.9,230.3 274.3,230.4 274.7,230.5 275.1,230.6 275.4,230.8 275.8,230.9 276.2,231.0 276.6,231.1 277.0,231.2 277.3,231.3 277.7,231.4 278.1,231.6 278.5,231.7 278.9,231.8 279.3,231.9 279.6,232.0 280.0,232.2 280.4,232.3 280.8,232.4 281.2,232.5 281.5,232.6 281.9,232.8 282.3,232.9 282.7,233.0 283.1,233.1 283.5,233.3 283.8,233.4 284.2,233.5 284.6,233.6 285.0,233.8 285.4,233.9 285.7,234.0 286.1,234.1 286.5,234.3 286.9,234.4 287.3,234.5 287.6,234.7 288.0,234.8 288.4,234.9 288.8,235.1 289.2,235.2 289.6,235.3 289.9,235.4 290.3,235.6 290.7,235.7 291.1,235.8 291.5,236.0 291.8,236.1 292.2,236.3 292.6,236.4 293.0,236.5 293.4,236.7 293.7,236.8 294.1,236.9 294.5,237.1 294.9,237.2 295.3,237.3 295.7,237.5 296.0,237.6 296.4,237.7 296.8,237.9 297.2,238.0 297.6,238.2 297.9,238.3 298.3,238.4 298.7,238.6 299.1,238.7 299.5,238.8 299.8,239.0 300.2,239.1 300.6,239.2 301.0,239.4 301.4,239.5 301.8,239.7 302.1,239.8 302.5,239.9 302.9,240.1 303.3,240.2 303.7,240.3 304.0,240.5 304.4,240.6 304.8,240.7 305.2,240.9 305.6,241.0 305.9,241.1 306.3,241.3 306.7,241.4 307.1,241.5 307.5,241.7 307.9,241.8 308.2,241.9 308.6,242.1 309.0,242.2 309.4,242.3 309.8,242.5 310.1,242.6 310.5,242.7 310.9,242.8 311.3,243.0 311.7,243.1 312.0,243.2 312.4,243.4 312.8,243.5 313.2,243.6 313.6,243.7 314.0,243.9 314.3,244.0 314.7,244.1 315.1,244.3 315.5,244.4 315.9,244.5 316.2,244.6 316.6,244.8 317.0,244.9 317.4,245.0 317.8,245.1 318.2,245.3 318.5,245.4 318.9,245.5 319.3,245.6 319.7,245.7 320.1,245.9 320.4,246.0 320.8,246.1 321.2,246.2 321.6,246.3 322.0,246.5 322.3,246.6 322.7,246.7 323.1,246.8 323.5,246.9 323.9,247.1 324.3,247.2 324.6,247.3 325.0,247.4 325.4,247.5 325.8,247.7 326.2,247.8 326.5,247.9 326.9,248.0 327.3,248.1 327.7,248.2 328.1,248.3 328.4,248.5 328.8,248.6 329.2,248.7 329.6,248.8 330.0,248.9 330.4,249.0 330.7,249.1 331.1,249.3 331.5,249.4 331.9,249.5 332.3,249.6 332.6,249.7 333.0,249.8 333.4,249.9 333.8,250.0 334.2,250.1 334.5,250.2 334.9,250.4 335.3,250.5 335.7,250.6 336.1,250.7 336.5,250.8 336.8,250.9 337.2,251.0 337.6,251.1 338.0,251.2 338.4,251.3 338.7,251.4 339.1,251.5 339.5,251.6 339.9,251.7 340.3,251.8 340.6,251.9 341.0,252.0 341.4,252.1 341.8,252.2 342.2,252.3 342.6,252.4 342.9,252.5 343.3,252.6 343.7,252.7 344.1,252.8 344.5,252.9 344.8,253.0 345.2,253.1 345.6,253.2 346.0,253.3 346.4,253.4 346.7,253.5 347.1,253.6 347.5,253.7 347.9,253.8 348.3,253.9 348.7,254.0 349.0,254.1 349.4,254.2 349.8,254.3 350.2,254.4 350.6,254.4 350.9,254.5 351.3,254.6 351.7,254.7 352.1,254.8 352.5,254.9 352.9,255.0 353.2,255.1 353.6,255.2 354.0,255.2 354.4,255.3 354.8,255.4 355.1,255.5 355.5,255.6 355.9,255.7 356.3,255.8 356.7,255.8 357.0,255.9 357.4,256.0 357.8,256.1 358.2,256.2 358.6,256.3 359.0,256.3 359.3,256.4 359.7,256.5 360.1,256.6 360.5,256.6 360.9,256.7 361.2,256.8 361.6,256.9 362.0,257.0 362.4,257.0 362.8,257.1 363.1,257.2 363.5,257.3 363.9,257.3 364.3,257.4 364.7,257.5 365.1,257.6 365.4,257.6 365.8,257.7 366.2,257.8 366.6,257.8 367.0,257.9 367.3,258.0 367.7,258.0 368.1,258.1 368.5,258.2 368.9,258.2 369.2,258.3 369.6,258.4 370.0,258.4 370.4,258.5 370.8,258.6 371.2,258.6 371.5,258.7 371.9,258.8 372.3,258.8 372.7,258.9 373.1,259.0 373.4,259.0 373.8,259.1 374.2,259.1 374.6,259.2 375.0,259.3 375.3,259.3 375.7,259.4 376.1,259.4 376.5,259.5 376.9,259.5 377.3,259.6 377.6,259.7 378.0,259.7 378.4,259.8 378.8,259.8 379.2,259.9 379.5,259.9 379.9,260.0 380.3,260.0 380.7,260.1 381.1,260.1 381.4,260.2 381.8,260.2 382.2,260.3 382.6,260.3 383.0,260.4 383.4,260.4 383.7,260.5 384.1,260.5 384.5,260.6 384.9,260.6 385.3,260.7 385.6,260.7 386.0,260.8 386.4,260.8 386.8,260.8 387.2,260.9 387.6,260.9 387.9,261.0 388.3,261.0 388.7,261.1 389.1,261.1 389.5,261.1 389.8,261.2 390.2,261.2 390.6,261.3 391.0,261.3 391.4,261.3 391.7,261.4 392.1,261.4 392.5,261.5 392.9,261.5 393.3,261.5 393.7,261.6 394.0,261.6 394.4,261.6 394.8,261.7 395.2,261.7 395.6,261.8 395.9,261.8 396.3,261.8 396.7,261.9 397.1,261.9 397.5,261.9 397.8,262.0 398.2,262.0 398.6,262.0 399.0,262.1 399.4,262.1 399.8,262.1 400.1,262.1 400.5,262.2 400.9,262.2 401.3,262.2 401.7,262.3 402.0,262.3 402.4,262.3 402.8,262.4 403.2,262.4 403.6,262.4 403.9,262.4 404.3,262.5 404.7,262.5 405.1,262.5 405.5,262.5 405.9,262.6 406.2,262.6 406.6,262.6 407.0,262.7 407.4,262.7 407.8,262.7 408.1,262.7 408.5,262.8 408.9,262.8 409.3,262.8 409.7,262.8 410.0,262.8 410.4,262.9 410.8,262.9 411.2,262.9 411.6,262.9 412.0,263.0 412.3,263.0 412.7,263.0 413.1,263.0 413.5,263.0 413.9,263.1 414.2,263.1 414.6,263.1 415.0,263.1 415.4,263.2 415.8,263.2 416.1,263.2 416.5,263.2 416.9,263.2 417.3,263.2 417.7,263.3 418.1,263.3 418.4,263.3 418.8,263.3 419.2,263.3 419.6,263.4 420.0,263.4 420.3,263.4 420.7,263.4 421.1,263.4 421.5,263.4 421.9,263.5 422.3,263.5 422.6,263.5 423.0,263.5 423.4,263.5 423.8,263.5 424.2,263.6 424.5,263.6 424.9,263.6 425.3,263.6 425.7,263.6 426.1,263.6 426.4,263.6 426.8,263.7 427.2,263.7 427.6,263.7 428.0,263.7 428.4,263.7 428.7,263.7 429.1,263.7 429.5,263.8 429.9,263.8 430.3,263.8 430.6,263.8 431.0,263.8 431.4,263.8 431.8,263.8 432.2,263.8 432.5,263.9 432.9,263.9 433.3,263.9 433.7,263.9 434.1,263.9 434.5,263.9 434.8,263.9 435.2,263.9 435.6,263.9 436.0,264.0 436.4,264.0 436.7,264.0 437.1,264.0 437.5,264.0 437.9,264.0 438.3,264.0 438.6,264.0 439.0,264.0 439.4,264.0 439.8,264.1 440.2,264.1 440.6,264.1 440.9,264.1 441.3,264.1 441.7,264.1 442.1,264.1 442.5,264.1 442.8,264.1 443.2,264.1 443.6,264.2 444.0,264.2 444.4,264.2 444.7,264.2 445.1,264.2 445.5,264.2 445.9,264.2 446.3,264.2 446.7,264.2 447.0,264.2 447.4,264.2 447.8,264.2 448.2,264.2 448.6,264.3 448.9,264.3 449.3,264.3 449.7,264.3 450.1,264.3 450.5,264.3 450.8,264.3 451.2,264.3 451.6,264.3 452.0,264.3 452.4,264.3 452.8,264.3 453.1,264.3 453.5,264.3 453.9,264.4 454.3,264.4 454.7,264.4 455.0,264.4 455.4,264.4 455.8,264.4 456.2,264.4 456.6,264.4 457.0,264.4 457.3,264.4 457.7,264.4 458.1,264.4 458.5,264.4 458.9,264.4 459.2,264.4 459.6,264.4 460.0,264.4 460.4,264.4 460.8,264.5 461.1,264.5 461.5,264.5 461.9,264.5 462.3,264.5 462.7,264.5 463.1,264.5 463.4,264.5 463.8,264.5 464.2,264.5 464.6,264.5 465.0,264.5 465.3,264.5 465.7,264.5 466.1,264.5 466.5,264.5 466.9,264.5 467.2,264.5 467.6,264.5 468.0,264.5 468.4,264.5 468.8,264.5 469.2,264.6 469.5,264.6 469.9,264.6 470.3,264.6 470.7,264.6 471.1,264.6 471.4,264.6 471.8,264.6 472.2,264.6 472.6,264.6 473.0,264.6 473.3,264.6 473.7,264.6 474.1,264.6 474.5,264.6 474.9,264.6 475.3,264.6 475.6,264.6 476.0,264.6 476.4,264.6 476.8,264.6 477.2,264.6 477.5,264.6 477.9,264.6 478.3,264.6 478.7,264.6 479.1,264.6 479.4,264.6 479.8,264.6 480.2,264.7 480.6,264.7 481.0,264.7 481.4,264.7 481.7,264.7 482.1,264.7 482.5,264.7 482.9,264.7 483.3,264.7 483.6,264.7 484.0,264.7 484.4,264.7 484.8,264.7 485.2,264.7 485.5,264.7 485.9,264.7 486.3,264.7 486.7,264.7 487.1,264.7 487.5,264.7 487.8,264.7 488.2,264.7 488.6,264.7" fill="none" stroke="#00e000" stroke-width="1.3" stroke-dasharray="1.1 1.1"/>
</g>
<g clip-path="url(#c2)"><path d="M542.4,74.9 H999.6 M542.4,74.9 V268.7 M999.6,74.9 V268.7 M542.4,264.9 H999.6" stroke="#a0a0a0" stroke-width="1.2" fill="none"/>
<path d="M538.4,74.9 H542.4 M999.6,74.9 H1003.6" stroke="#a0a0a0" stroke-width="1"/>
<path d="M538.4,93.9 H542.4 M999.6,93.9 H1003.6" stroke="#a0a0a0" stroke-width="1"/>
<path d="M538.4,112.9 H542.4 M999.6,112.9 H1003.6" stroke="#a0a0a0" stroke-width="1"/>
<path d="M538.4,131.9 H542.4 M999.6,131.9 H1003.6" stroke="#a0a0a0" stroke-width="1"/>
<path d="M538.4,150.9 H542.4 M999.6,150.9 H1003.6" stroke="#a0a0a0" stroke-width="1"/>
<path d="M538.4,169.9 H542.4 M999.6,169.9 H1003.6" stroke="#a0a0a0" stroke-width="1"/>
<path d="M538.4,188.9 H542.4 M999.6,188.9 H1003.6" stroke="#a0a0a0" stroke-width="1"/>
<path d="M538.4,207.9 H542.4 M999.6,207.9 H1003.6" stroke="#a0a0a0" stroke-width="1"/>
<path d="M538.4,226.9 H542.4 M999.6,226.9 H1003.6" stroke="#a0a0a0" stroke-width="1"/>
<path d="M538.4,245.9 H542.4 M999.6,245.9 H1003.6" stroke="#a0a0a0" stroke-width="1"/>
<path d="M538.4,264.9 H542.4 M999.6,264.9 H1003.6" stroke="#a0a0a0" stroke-width="1"/>
<path d="M565.3,264.9 V266.9" stroke="#a0a0a0" stroke-width="1"/>
<path d="M578.8,264.9 V266.9" stroke="#a0a0a0" stroke-width="1"/>
<path d="M588.3,264.9 V266.9" stroke="#a0a0a0" stroke-width="1"/>
<path d="M595.7,264.9 V266.9" stroke="#a0a0a0" stroke-width="1"/>
<path d="M601.7,264.9 V266.9" stroke="#a0a0a0" stroke-width="1"/>
<path d="M606.8,264.9 V266.9" stroke="#a0a0a0" stroke-width="1"/>
<path d="M611.2,264.9 V266.9" stroke="#a0a0a0" stroke-width="1"/>
<path d="M615.1,264.9 V266.9" stroke="#a0a0a0" stroke-width="1"/>
<path d="M641.5,264.9 V266.9" stroke="#a0a0a0" stroke-width="1"/>
<path d="M655.0,264.9 V266.9" stroke="#a0a0a0" stroke-width="1"/>
<path d="M664.5,264.9 V266.9" stroke="#a0a0a0" stroke-width="1"/>
<path d="M671.9,264.9 V266.9" stroke="#a0a0a0" stroke-width="1"/>
<path d="M677.9,264.9 V266.9" stroke="#a0a0a0" stroke-width="1"/>
<path d="M683.0,264.9 V266.9" stroke="#a0a0a0" stroke-width="1"/>
<path d="M687.4,264.9 V266.9" stroke="#a0a0a0" stroke-width="1"/>
<path d="M691.3,264.9 V266.9" stroke="#a0a0a0" stroke-width="1"/>
<path d="M717.7,264.9 V266.9" stroke="#a0a0a0" stroke-width="1"/>
<path d="M731.2,264.9 V266.9" stroke="#a0a0a0" stroke-width="1"/>
<path d="M740.7,264.9 V266.9" stroke="#a0a0a0" stroke-width="1"/>
<path d="M748.1,264.9 V266.9" stroke="#a0a0a0" stroke-width="1"/>
<path d="M754.1,264.9 V266.9" stroke="#a0a0a0" stroke-width="1"/>
<path d="M759.2,264.9 V266.9" stroke="#a0a0a0" stroke-width="1"/>
<path d="M763.6,264.9 V266.9" stroke="#a0a0a0" stroke-width="1"/>
<path d="M767.5,264.9 V266.9" stroke="#a0a0a0" stroke-width="1"/>
<path d="M793.9,264.9 V266.9" stroke="#a0a0a0" stroke-width="1"/>
<path d="M807.4,264.9 V266.9" stroke="#a0a0a0" stroke-width="1"/>
<path d="M816.9,264.9 V266.9" stroke="#a0a0a0" stroke-width="1"/>
<path d="M824.3,264.9 V266.9" stroke="#a0a0a0" stroke-width="1"/>
<path d="M830.3,264.9 V266.9" stroke="#a0a0a0" stroke-width="1"/>
<path d="M835.4,264.9 V266.9" stroke="#a0a0a0" stroke-width="1"/>
<path d="M839.8,264.9 V266.9" stroke="#a0a0a0" stroke-width="1"/>
<path d="M843.7,264.9 V266.9" stroke="#a0a0a0" stroke-width="1"/>
<path d="M870.1,264.9 V266.9" stroke="#a0a0a0" stroke-width="1"/>
<path d="M883.6,264.9 V266.9" stroke="#a0a0a0" stroke-width="1"/>
<path d="M893.1,264.9 V266.9" stroke="#a0a0a0" stroke-width="1"/>
<path d="M900.5,264.9 V266.9" stroke="#a0a0a0" stroke-width="1"/>
<path d="M906.5,264.9 V266.9" stroke="#a0a0a0" stroke-width="1"/>
<path d="M911.6,264.9 V266.9" stroke="#a0a0a0" stroke-width="1"/>
<path d="M916.0,264.9 V266.9" stroke="#a0a0a0" stroke-width="1"/>
<path d="M919.9,264.9 V266.9" stroke="#a0a0a0" stroke-width="1"/>
<path d="M946.3,264.9 V266.9" stroke="#a0a0a0" stroke-width="1"/>
<path d="M959.8,264.9 V266.9" stroke="#a0a0a0" stroke-width="1"/>
<path d="M969.3,264.9 V266.9" stroke="#a0a0a0" stroke-width="1"/>
<path d="M976.7,264.9 V266.9" stroke="#a0a0a0" stroke-width="1"/>
<path d="M982.7,264.9 V266.9" stroke="#a0a0a0" stroke-width="1"/>
<path d="M987.8,264.9 V266.9" stroke="#a0a0a0" stroke-width="1"/>
<path d="M992.2,264.9 V266.9" stroke="#a0a0a0" stroke-width="1"/>
<path d="M996.1,264.9 V266.9" stroke="#a0a0a0" stroke-width="1"/>
<path d="M542.4,264.9 V268.7" stroke="#a0a0a0" stroke-width="1"/>
<path d="M618.6,264.9 V268.7" stroke="#a0a0a0" stroke-width="1"/>
<path d="M694.8,264.9 V268.7" stroke="#a0a0a0" stroke-width="1"/>
<path d="M771.0,264.9 V268.7" stroke="#a0a0a0" stroke-width="1"/>
<path d="M847.2,264.9 V268.7" stroke="#a0a0a0" stroke-width="1"/>
<path d="M923.4,264.9 V268.7" stroke="#a0a0a0" stroke-width="1"/>
<path d="M999.6,264.9 V268.7" stroke="#a0a0a0" stroke-width="1"/>
<polyline points="542.4,80.7 542.8,81.1 543.2,81.5 543.5,81.8 543.9,82.2 544.3,82.6 544.7,83.0 545.1,83.4 545.5,83.7 545.8,84.1 546.2,84.5 546.6,84.9 547.0,85.3 547.4,85.6 547.7,86.0 548.1,86.4 548.5,86.8 548.9,87.2 549.3,87.5 549.6,87.9 550.0,88.3 550.4,88.7 550.8,89.1 551.2,89.4 551.6,89.8 551.9,90.2 552.3,90.6 552.7,91.0 553.1,91.3 553.5,91.7 553.8,92.1 554.2,92.5 554.6,92.9 555.0,93.3 555.4,93.6 555.7,94.0 556.1,94.4 556.5,94.8 556.9,95.2 557.3,95.5 557.7,95.9 558.0,96.3 558.4,96.7 558.8,97.1 559.2,97.4 559.6,97.8 559.9,98.2 560.3,98.6 560.7,99.0 561.1,99.3 561.5,99.7 561.8,100.1 562.2,100.5 562.6,100.9 563.0,101.2 563.4,101.6 563.8,102.0 564.1,102.4 564.5,102.8 564.9,103.1 565.3,103.5 565.7,103.9 566.0,104.3 566.4,104.7 566.8,105.0 567.2,105.4 567.6,105.8 567.9,106.2 568.3,106.6 568.7,106.9 569.1,107.3 569.5,107.7 569.9,108.1 570.2,108.5 570.6,108.8 571.0,109.2 571.4,109.6 571.8,110.0 572.1,110.4 572.5,110.7 572.9,111.1 573.3,111.5 573.7,111.9 574.0,112.3 574.4,112.6 574.8,113.0 575.2,113.4 575.6,113.8 576.0,114.2 576.3,114.5 576.7,114.9 577.1,115.3 577.5,115.7 577.9,116.1 578.2,116.4 578.6,116.8 579.0,117.2 579.4,117.6 579.8,118.0 580.2,118.4 580.5,118.7 580.9,119.1 581.3,119.5 581.7,119.9 582.1,120.3 582.4,120.6 582.8,121.0 583.2,121.4 583.6,121.8 584.0,122.2 584.3,122.5 584.7,122.9 585.1,123.3 585.5,123.7 585.9,124.1 586.3,124.4 586.6,124.8 587.0,125.2 587.4,125.6 587.8,126.0 588.2,126.3 588.5,126.7 588.9,127.1 589.3,127.5 589.7,127.9 590.1,128.2 590.4,128.6 590.8,129.0 591.2,129.4 591.6,129.8 592.0,130.1 592.4,130.5 592.7,130.9 593.1,131.3 593.5,131.7 593.9,132.0 594.3,132.4 594.6,132.8 595.0,133.2 595.4,133.6 595.8,133.9 596.2,134.3 596.5,134.7 596.9,135.1 597.3,135.5 597.7,135.8 598.1,136.2 598.5,136.6 598.8,137.0 599.2,137.4 599.6,137.7 600.0,138.1 600.4,138.5 600.7,138.9 601.1,139.3 601.5,139.6 601.9,140.0 602.3,140.4 602.6,140.8 603.0,141.2 603.4,141.5 603.8,141.9 604.2,142.3 604.6,142.7 604.9,143.1 605.3,143.4 605.7,143.8 606.1,144.2 606.5,144.6 606.8,145.0 607.2,145.3 607.6,145.7 608.0,146.1 608.4,146.5 608.7,146.9 609.1,147.2 609.5,147.6 609.9,148.0 610.3,148.4 610.7,148.8 611.0,149.1 611.4,149.5 611.8,149.9 612.2,150.3 612.6,150.7 612.9,151.0 613.3,151.4 613.7,151.8 614.1,152.2 614.5,152.6 614.9,152.9 615.2,153.3 615.6,153.7 616.0,154.1 616.4,154.5 616.8,154.8 617.1,155.2 617.5,155.6 617.9,156.0 618.3,156.4 618.7,156.7 619.0,157.1 619.4,157.5 619.8,157.9 620.2,158.3 620.6,158.6 621.0,159.0 621.3,159.4 621.7,159.8 622.1,160.2 622.5,160.5 622.9,160.9 623.2,161.3 623.6,161.7 624.0,162.1 624.4,162.4 624.8,162.8 625.1,163.2 625.5,163.6 625.9,164.0 626.3,164.3 626.7,164.7 627.1,165.1 627.4,165.5 627.8,165.8 628.2,166.2 628.6,166.6 629.0,167.0 629.3,167.4 629.7,167.7 630.1,168.1 630.5,168.5 630.9,168.9 631.2,169.3 631.6,169.6 632.0,170.0 632.4,170.4 632.8,170.8 633.2,171.2 633.5,171.5 633.9,171.9 634.3,172.3 634.7,172.7 635.1,173.0 635.4,173.4 635.8,173.8 636.2,174.2 636.6,174.6 637.0,174.9 637.3,175.3 637.7,175.7 638.1,176.1 638.5,176.5 638.9,176.8 639.3,177.2 639.6,177.6 640.0,178.0 640.4,178.3 640.8,178.7 641.2,179.1 641.5,179.5 641.9,179.9 642.3,180.2 642.7,180.6 643.1,181.0 643.4,181.4 643.8,181.7 644.2,182.1 644.6,182.5 645.0,182.9 645.4,183.3 645.7,183.6 646.1,184.0 646.5,184.4 646.9,184.8 647.3,185.1 647.6,185.5 648.0,185.9 648.4,186.3 648.8,186.7 649.2,187.0 649.6,187.4 649.9,187.8 650.3,188.2 650.7,188.5 651.1,188.9 651.5,189.3 651.8,189.7 652.2,190.0 652.6,190.4 653.0,190.8 653.4,191.2 653.7,191.5 654.1,191.9 654.5,192.3 654.9,192.7 655.3,193.0 655.7,193.4 656.0,193.8 656.4,194.2 656.8,194.5 657.2,194.9 657.6,195.3 657.9,195.7 658.3,196.0 658.7,196.4 659.1,196.8 659.5,197.2 659.8,197.5 660.2,197.9 660.6,198.3 661.0,198.6 661.4,199.0 661.8,199.4 662.1,199.8 662.5,200.1 662.9,200.5 663.3,200.9 663.7,201.3 664.0,201.6 664.4,202.0 664.8,202.4 665.2,202.7 665.6,203.1 665.9,203.5 666.3,203.8 666.7,204.2 667.1,204.6 667.5,205.0 667.9,205.3 668.2,205.7 668.6,206.1 669.0,206.4 669.4,206.8 669.8,207.2 670.1,207.5 670.5,207.9 670.9,208.3 671.3,208.6 671.7,209.0 672.0,209.4 672.4,209.7 672.8,210.1 673.2,210.5 673.6,210.8 674.0,211.2 674.3,211.6 674.7,211.9 675.1,212.3 675.5,212.6 675.9,213.0 676.2,213.4 676.6,213.7 677.0,214.1 677.4,214.5 677.8,214.8 678.1,215.2 678.5,215.5 678.9,215.9 679.3,216.3 679.7,216.6 680.1,217.0 680.4,217.3 680.8,217.7 681.2,218.0 681.6,218.4 682.0,218.7 682.3,219.1 682.7,219.5 683.1,219.8 683.5,220.2 683.9,220.5 684.3,220.9 684.6,221.2 685.0,221.6 685.4,221.9 685.8,222.3 686.2,222.6 686.5,223.0 686.9,223.3 687.3,223.7 687.7,224.0 688.1,224.3 688.4,224.7 688.8,225.0 689.2,225.4 689.6,225.7 690.0,226.1 690.4,226.4 690.7,226.7 691.1,227.1 691.5,227.4 691.9,227.7 692.3,228.1 692.6,228.4 693.0,228.8 693.4,229.1 693.8,229.4 694.2,229.7 694.5,230.1 694.9,230.4 695.3,230.7 695.7,231.1 696.1,231.4 696.5,231.7 696.8,232.0 697.2,232.4 697.6,232.7 698.0,233.0 698.4,233.3 698.7,233.6 699.1,234.0 699.5,234.3 699.9,234.6 700.3,234.9 700.6,235.2 701.0,235.5 701.4,235.8 701.8,236.1 702.2,236.4 702.6,236.7 702.9,237.1 703.3,237.4 703.7,237.7 704.1,238.0 704.5,238.2 704.8,238.5 705.2,238.8 705.6,239.1 706.0,239.4 706.4,239.7 706.7,240.0 707.1,240.3 707.5,240.6 707.9,240.9 708.3,241.1 708.7,241.4 709.0,241.7 709.4,242.0 709.8,242.3 710.2,242.5 710.6,242.8 710.9,243.1 711.3,243.3 711.7,243.6 712.1,243.9 712.5,244.1 712.8,244.4 713.2,244.6 713.6,244.9 714.0,245.2 714.4,245.4 714.8,245.7 715.1,245.9 715.5,246.2 715.9,246.4 716.3,246.6 716.7,246.9 717.0,247.1 717.4,247.4 717.8,247.6 718.2,247.8 718.6,248.1 719.0,248.3 719.3,248.5 719.7,248.7 720.1,249.0 720.5,249.2 720.9,249.4 721.2,249.6 721.6,249.8 722.0,250.0 722.4,250.2 722.8,250.4 723.1,250.7 723.5,250.9 723.9,251.1 724.3,251.3 724.7,251.4 725.1,251.6 725.4,251.8 725.8,252.0 726.2,252.2 726.6,252.4 727.0,252.6 727.3,252.8 727.7,252.9 728.1,253.1 728.5,253.3 728.9,253.5 729.2,253.6 729.6,253.8 730.0,254.0 730.4,254.1 730.8,254.3 731.2,254.4 731.5,254.6 731.9,254.8 732.3,254.9 732.7,255.1 733.1,255.2 733.4,255.4 733.8,255.5 734.2,255.6 734.6,255.8 735.0,255.9 735.3,256.1 735.7,256.2 736.1,256.3 736.5,256.4 736.9,256.6 737.3,256.7 737.6,256.8 738.0,256.9 738.4,257.1 738.8,257.2 739.2,257.3 739.5,257.4 739.9,257.5 740.3,257.6 740.7,257.8 741.1,257.9 741.4,258.0 741.8,258.1 742.2,258.2 742.6,258.3 743.0,258.4 743.4,258.5 743.7,258.6 744.1,258.7 744.5,258.8 744.9,258.8 745.3,258.9 745.6,259.0 746.0,259.1 746.4,259.2 746.8,259.3 747.2,259.4 747.5,259.4 747.9,259.5 748.3,259.6 748.7,259.7 749.1,259.7 749.5,259.8 749.8,259.9 750.2,260.0 750.6,260.0 751.0,260.1 751.4,260.2 751.7,260.2 752.1,260.3 752.5,260.3 752.9,260.4 753.3,260.5 753.7,260.5 754.0,260.6 754.4,260.6 754.8,260.7 755.2,260.8 755.6,260.8 755.9,260.9 756.3,260.9 756.7,261.0 757.1,261.0 757.5,261.1 757.8,261.1 758.2,261.2 758.6,261.2 759.0,261.2 759.4,261.3 759.8,261.3 760.1,261.4 760.5,261.4 760.9,261.5 761.3,261.5 761.7,261.5 762.0,261.6 762.4,261.6 762.8,261.6 763.2,261.7 763.6,261.7 763.9,261.8 764.3,261.8 764.7,261.8 765.1,261.8 765.5,261.9 765.9,261.9 766.2,261.9 766.6,262.0 767.0,262.0 767.4,262.0 767.8,262.1 768.1,262.1 768.5,262.1 768.9,262.1 769.3,262.2 769.7,262.2 770.0,262.2 770.4,262.2 770.8,262.3 771.2,262.3 771.6,262.3 772.0,262.3 772.3,262.3 772.7,262.4 773.1,262.4 773.5,262.4 773.9,262.4 774.2,262.4 774.6,262.5 775.0,262.5 775.4,262.5 775.8,262.5 776.1,262.5 776.5,262.6 776.9,262.6 777.3,262.6 777.7,262.6 778.1,262.6 778.4,262.6 778.8,262.6 779.2,262.7 779.6,262.7 780.0,262.7 780.3,262.7 780.7,262.7 781.1,262.7 781.5,262.7 781.9,262.8 782.2,262.8 782.6,262.8 783.0,262.8 783.4,262.8 783.8,262.8 784.2,262.8 784.5,262.8 784.9,262.8 785.3,262.9 785.7,262.9 786.1,262.9 786.4,262.9 786.8,262.9 787.2,262.9 787.6,262.9 788.0,262.9 788.3,262.9 788.7,262.9 789.1,262.9 789.5,262.9 789.9,263.0 790.3,263.0 790.6,263.0 791.0,263.0 791.4,263.0 791.8,263.0 792.2,263.0 792.5,263.0 792.9,263.0 793.3,263.0 793.7,263.0 794.1,263.0 794.5,263.0 794.8,263.0 795.2,263.0 795.6,263.1 796.0,263.1 796.4,263.1 796.7,263.1 797.1,263.1 797.5,263.1 797.9,263.1 798.3,263.1 798.6,263.1 799.0,263.1 799.4,263.1 799.8,263.1 800.2,263.1 800.6,263.1 800.9,263.1 801.3,263.1 801.7,263.1 802.1,263.1 802.5,263.1 802.8,263.1 803.2,263.1 803.6,263.1 804.0,263.1 804.4,263.2 804.7,263.2 805.1,263.2 805.5,263.2 805.9,263.2 806.3,263.2 806.7,263.2 807.0,263.2 807.4,263.2 807.8,263.2 808.2,263.2 808.6,263.2 808.9,263.2 809.3,263.2 809.7,263.2 810.1,263.2 810.5,263.2 810.8,263.2 811.2,263.2 811.6,263.2 812.0,263.2 812.4,263.2 812.8,263.2 813.1,263.2 813.5,263.2 813.9,263.2 814.3,263.2 814.7,263.2 815.0,263.2 815.4,263.2 815.8,263.2 816.2,263.2 816.6,263.2 816.9,263.2 817.3,263.2 817.7,263.2 818.1,263.2 818.5,263.2 818.9,263.2 819.2,263.2 819.6,263.2 820.0,263.2 820.4,263.2 820.8,263.2 821.1,263.2 821.5,263.2 821.9,263.2 822.3,263.2 822.7,263.2 823.0,263.2 823.4,263.2 823.8,263.2 824.2,263.2 824.6,263.2 825.0,263.3 825.3,263.3 825.7,263.3 826.1,263.3 826.5,263.3 826.9,263.3 827.2,263.3 827.6,263.3 828.0,263.3 828.4,263.3 828.8,263.3 829.2,263.3 829.5,263.3 829.9,263.3 830.3,263.3 830.7,263.3 831.1,263.3 831.4,263.3 831.8,263.3 832.2,263.3 832.6,263.3 833.0,263.3 833.3,263.3 833.7,263.3 834.1,263.3 834.5,263.3 834.9,263.3 835.3,263.3 835.6,263.3 836.0,263.3 836.4,263.3 836.8,263.3 837.2,263.3 837.5,263.3 837.9,263.3 838.3,263.3 838.7,263.3 839.1,263.3 839.4,263.3 839.8,263.3 840.2,263.3 840.6,263.3 841.0,263.3 841.4,263.3 841.7,263.3 842.1,263.3 842.5,263.3 842.9,263.3 843.3,263.3 843.6,263.3 844.0,263.3 844.4,263.3 844.8,263.3 845.2,263.3 845.5,263.3 845.9,263.3 846.3,263.3 846.7,263.3 847.1,263.3 847.5,263.3 847.8,263.3 848.2,263.3 848.6,263.3 849.0,263.3 849.4,263.3 849.7,263.3 850.1,263.3 850.5,263.3 850.9,263.3 851.3,263.3 851.6,263.3 852.0,263.3 852.4,263.3 852.8,263.3 853.2,263.3 853.6,263.3 853.9,263.3 854.3,263.3 854.7,263.3 855.1,263.3 855.5,263.3 855.8,263.3 856.2,263.3 856.6,263.3 857.0,263.3 857.4,263.3 857.7,263.3 858.1,263.3 858.5,263.3 858.9,263.3 859.3,263.3 859.7,263.3 860.0,263.3 860.4,263.3 860.8,263.3 861.2,263.3 861.6,263.3 861.9,263.3 862.3,263.3 862.7,263.3 863.1,263.3 863.5,263.3 863.9,263.3 864.2,263.3 864.6,263.3 865.0,263.3 865.4,263.3 865.8,263.3 866.1,263.3 866.5,263.3 866.9,263.3 867.3,263.3 867.7,263.3 868.0,263.3 868.4,263.3 868.8,263.3 869.2,263.3 869.6,263.3 870.0,263.3 870.3,263.3 870.7,263.3 871.1,263.3 871.5,263.3 871.9,263.3 872.2,263.3 872.6,263.3 873.0,263.3 873.4,263.3 873.8,263.3 874.1,263.3 874.5,263.3 874.9,263.3 875.3,263.3 875.7,263.3 876.1,263.3 876.4,263.3 876.8,263.3 877.2,263.3 877.6,263.3 878.0,263.3 878.3,263.3 878.7,263.3 879.1,263.3 879.5,263.3 879.9,263.3 880.2,263.3 880.6,263.3 881.0,263.3 881.4,263.3 881.8,263.3 882.2,263.3 882.5,263.3 882.9,263.3 883.3,263.3 883.7,263.3 884.1,263.3 884.4,263.3 884.8,263.3 885.2,263.3 885.6,263.3 886.0,263.3 886.3,263.3 886.7,263.3 887.1,263.3 887.5,263.3 887.9,263.3 888.3,263.3 888.6,263.3 889.0,263.3 889.4,263.3 889.8,263.3 890.2,263.3 890.5,263.3 890.9,263.3 891.3,263.3 891.7,263.3 892.1,263.3 892.4,263.3 892.8,263.3 893.2,263.3 893.6,263.3 894.0,263.3 894.4,263.3 894.7,263.3 895.1,263.3 895.5,263.3 895.9,263.3 896.3,263.3 896.6,263.3 897.0,263.3 897.4,263.3 897.8,263.3 898.2,263.3 898.6,263.3 898.9,263.3 899.3,263.3 899.7,263.3 900.1,263.3 900.5,263.3 900.8,263.3 901.2,263.3 901.6,263.3 902.0,263.3 902.4,263.3 902.7,263.3 903.1,263.3 903.5,263.3 903.9,263.3 904.3,263.3 904.7,263.3 905.0,263.3 905.4,263.3 905.8,263.3 906.2,263.3 906.6,263.3 906.9,263.3 907.3,263.3 907.7,263.3 908.1,263.3 908.5,263.3 908.8,263.3 909.2,263.3 909.6,263.3 910.0,263.3 910.4,263.3 910.8,263.3 911.1,263.3 911.5,263.3 911.9,263.3 912.3,263.3 912.7,263.3 913.0,263.3 913.4,263.3 913.8,263.3 914.2,263.3 914.6,263.3 914.9,263.3 915.3,263.3 915.7,263.3 916.1,263.3 916.5,263.3 916.9,263.3 917.2,263.3 917.6,263.3 918.0,263.3 918.4,263.3 918.8,263.3 919.1,263.3 919.5,263.3 919.9,263.3 920.3,263.3 920.7,263.3 921.0,263.3 921.4,263.3 921.8,263.3 922.2,263.3 922.6,263.3 923.0,263.3 923.3,263.3 923.7,263.3 924.1,263.3 924.5,263.3 924.9,263.3 925.2,263.3 925.6,263.3 926.0,263.3 926.4,263.3 926.8,263.3 927.1,263.3 927.5,263.3 927.9,263.3 928.3,263.3 928.7,263.3 929.1,263.3 929.4,263.3 929.8,263.3 930.2,263.3 930.6,263.3 931.0,263.3 931.3,263.3 931.7,263.3 932.1,263.3 932.5,263.3 932.9,263.3 933.3,263.3 933.6,263.3 934.0,263.3 934.4,263.3 934.8,263.3 935.2,263.3 935.5,263.3 935.9,263.3 936.3,263.3 936.7,263.3 937.1,263.3 937.4,263.3 937.8,263.3 938.2,263.3 938.6,263.3 939.0,263.3 939.4,263.3 939.7,263.3 940.1,263.3 940.5,263.3 940.9,263.3 941.3,263.3 941.6,263.3 942.0,263.3 942.4,263.3 942.8,263.3 943.2,263.3 943.5,263.3 943.9,263.3 944.3,263.3 944.7,263.3 945.1,263.3 945.5,263.3 945.8,263.3 946.2,263.3 946.6,263.3 947.0,263.3 947.4,263.3 947.7,263.3 948.1,263.3 948.5,263.3 948.9,263.3 949.3,263.3 949.6,263.3 950.0,263.3 950.4,263.3 950.8,263.3 951.2,263.3 951.6,263.3 951.9,263.3 952.3,263.3 952.7,263.3 953.1,263.3 953.5,263.3 953.8,263.3 954.2,263.3 954.6,263.3 955.0,263.3 955.4,263.3 955.7,263.3 956.1,263.3 956.5,263.3 956.9,263.3 957.3,263.3 957.7,263.3 958.0,263.3 958.4,263.3 958.8,263.3 959.2,263.3 959.6,263.3 959.9,263.3 960.3,263.3 960.7,263.3 961.1,263.3 961.5,263.3 961.8,263.3 962.2,263.3 962.6,263.3 963.0,263.3 963.4,263.3 963.8,263.3 964.1,263.3 964.5,263.3 964.9,263.3 965.3,263.3 965.7,263.3 966.0,263.3 966.4,263.3 966.8,263.3 967.2,263.3 967.6,263.3 968.0,263.3 968.3,263.3 968.7,263.3 969.1,263.3 969.5,263.3 969.9,263.3 970.2,263.3 970.6,263.3 971.0,263.3 971.4,263.3 971.8,263.3 972.1,263.3 972.5,263.3 972.9,263.3 973.3,263.3 973.7,263.3 974.1,263.3 974.4,263.3 974.8,263.3 975.2,263.3 975.6,263.3 976.0,263.3 976.3,263.3 976.7,263.3 977.1,263.3 977.5,263.3 977.9,263.3 978.2,263.3 978.6,263.3 979.0,263.3 979.4,263.3 979.8,263.3 980.2,263.3 980.5,263.3 980.9,263.3 981.3,263.3 981.7,263.3 982.1,263.3 982.4,263.3 982.8,263.3 983.2,263.3 983.6,263.3 984.0,263.3 984.3,263.3 984.7,263.3 985.1,263.3 985.5,263.3 985.9,263.3 986.3,263.3 986.6,263.3 987.0,263.3 987.4,263.3 987.8,263.3 988.2,263.3 988.5,263.3 988.9,263.3 989.3,263.3 989.7,263.3 990.1,263.3 990.4,263.3 990.8,263.3 991.2,263.3 991.6,263.3 992.0,263.3 992.4,263.3 992.7,263.3 993.1,263.3 993.5,263.3 993.9,263.3 994.3,263.3 994.6,263.3 995.0,263.3 995.4,263.3 995.8,263.3 996.2,263.3 996.5,263.3 996.9,263.3 997.3,263.3 997.7,263.3 998.1,263.3 998.5,263.3 998.8,263.3 999.2,263.3 999.6,263.3" fill="none" stroke="#00d800" stroke-width="1.6"/>
<polyline points="542.4,75.4 542.8,75.4 543.2,75.4 543.5,75.4 543.9,75.4 544.3,75.4 544.7,75.4 545.1,75.4 545.5,75.4 545.8,75.4 546.2,75.4 546.6,75.4 547.0,75.4 547.4,75.5 547.7,75.5 548.1,75.5 548.5,75.5 548.9,75.5 549.3,75.5 549.6,75.5 550.0,75.5 550.4,75.5 550.8,75.5 551.2,75.5 551.6,75.5 551.9,75.5 552.3,75.5 552.7,75.6 553.1,75.6 553.5,75.6 553.8,75.6 554.2,75.6 554.6,75.6 555.0,75.6 555.4,75.6 555.7,75.6 556.1,75.6 556.5,75.6 556.9,75.6 557.3,75.7 557.7,75.7 558.0,75.7 558.4,75.7 558.8,75.7 559.2,75.7 559.6,75.7 559.9,75.7 560.3,75.7 560.7,75.7 561.1,75.7 561.5,75.8 561.8,75.8 562.2,75.8 562.6,75.8 563.0,75.8 563.4,75.8 563.8,75.8 564.1,75.8 564.5,75.8 564.9,75.8 565.3,75.9 565.7,75.9 566.0,75.9 566.4,75.9 566.8,75.9 567.2,75.9 567.6,75.9 567.9,75.9 568.3,75.9 568.7,76.0 569.1,76.0 569.5,76.0 569.9,76.0 570.2,76.0 570.6,76.0 571.0,76.0 571.4,76.0 571.8,76.1 572.1,76.1 572.5,76.1 572.9,76.1 573.3,76.1 573.7,76.1 574.0,76.1 574.4,76.2 574.8,76.2 575.2,76.2 575.6,76.2 576.0,76.2 576.3,76.2 576.7,76.3 577.1,76.3 577.5,76.3 577.9,76.3 578.2,76.3 578.6,76.3 579.0,76.3 579.4,76.4 579.8,76.4 580.2,76.4 580.5,76.4 580.9,76.4 581.3,76.5 581.7,76.5 582.1,76.5 582.4,76.5 582.8,76.5 583.2,76.5 583.6,76.6 584.0,76.6 584.3,76.6 584.7,76.6 585.1,76.6 585.5,76.7 585.9,76.7 586.3,76.7 586.6,76.7 587.0,76.7 587.4,76.8 587.8,76.8 588.2,76.8 588.5,76.8 588.9,76.9 589.3,76.9 589.7,76.9 590.1,76.9 590.4,76.9 590.8,77.0 591.2,77.0 591.6,77.0 592.0,77.0 592.4,77.1 592.7,77.1 593.1,77.1 593.5,77.1 593.9,77.2 594.3,77.2 594.6,77.2 595.0,77.2 595.4,77.3 595.8,77.3 596.2,77.3 596.5,77.4 596.9,77.4 597.3,77.4 597.7,77.4 598.1,77.5 598.5,77.5 598.8,77.5 599.2,77.6 599.6,77.6 600.0,77.6 600.4,77.7 600.7,77.7 601.1,77.7 601.5,77.8 601.9,77.8 602.3,77.8 602.6,77.9 603.0,77.9 603.4,77.9 603.8,78.0 604.2,78.0 604.6,78.0 604.9,78.1 605.3,78.1 605.7,78.1 606.1,78.2 606.5,78.2 606.8,78.3 607.2,78.3 607.6,78.3 608.0,78.4 608.4,78.4 608.7,78.5 609.1,78.5 609.5,78.5 609.9,78.6 610.3,78.6 610.7,78.7 611.0,78.7 611.4,78.8 611.8,78.8 612.2,78.8 612.6,78.9 612.9,78.9 613.3,79.0 613.7,79.0 614.1,79.1 614.5,79.1 614.9,79.2 615.2,79.2 615.6,79.3 616.0,79.3 616.4,79.4 616.8,79.4 617.1,79.5 617.5,79.5 617.9,79.6 618.3,79.6 618.7,79.7 619.0,79.8 619.4,79.8 619.8,79.9 620.2,79.9 620.6,80.0 621.0,80.0 621.3,80.1 621.7,80.2 622.1,80.2 622.5,80.3 622.9,80.3 623.2,80.4 623.6,80.5 624.0,80.5 624.4,80.6 624.8,80.7 625.1,80.7 625.5,80.8 625.9,80.9 626.3,80.9 626.7,81.0 627.1,81.1 627.4,81.1 627.8,81.2 628.2,81.3 628.6,81.4 629.0,81.4 629.3,81.5 629.7,81.6 630.1,81.7 630.5,81.7 630.9,81.8 631.2,81.9 631.6,82.0 632.0,82.1 632.4,82.2 632.8,82.2 633.2,82.3 633.5,82.4 633.9,82.5 634.3,82.6 634.7,82.7 635.1,82.8 635.4,82.9 635.8,82.9 636.2,83.0 636.6,83.1 637.0,83.2 637.3,83.3 637.7,83.4 638.1,83.5 638.5,83.6 638.9,83.7 639.3,83.8 639.6,83.9 640.0,84.0 640.4,84.1 640.8,84.2 641.2,84.3 641.5,84.5 641.9,84.6 642.3,84.7 642.7,84.8 643.1,84.9 643.4,85.0 643.8,85.1 644.2,85.3 644.6,85.4 645.0,85.5 645.4,85.6 645.7,85.7 646.1,85.9 646.5,86.0 646.9,86.1 647.3,86.3 647.6,86.4 648.0,86.5 648.4,86.6 648.8,86.8 649.2,86.9 649.6,87.1 649.9,87.2 650.3,87.3 650.7,87.5 651.1,87.6 651.5,87.8 651.8,87.9 652.2,88.1 652.6,88.2 653.0,88.4 653.4,88.5 653.7,88.7 654.1,88.8 654.5,89.0 654.9,89.2 655.3,89.3 655.7,89.5 656.0,89.7 656.4,89.8 656.8,90.0 657.2,90.2 657.6,90.4 657.9,90.5 658.3,90.7 658.7,90.9 659.1,91.1 659.5,91.3 659.8,91.4 660.2,91.6 660.6,91.8 661.0,92.0 661.4,92.2 661.8,92.4 662.1,92.6 662.5,92.8 662.9,93.0 663.3,93.2 663.7,93.4 664.0,93.6 664.4,93.9 664.8,94.1 665.2,94.3 665.6,94.5 665.9,94.7 666.3,95.0 666.7,95.2 667.1,95.4 667.5,95.7 667.9,95.9 668.2,96.1 668.6,96.4 669.0,96.6 669.4,96.9 669.8,97.1 670.1,97.4 670.5,97.6 670.9,97.9 671.3,98.1 671.7,98.4 672.0,98.7 672.4,98.9 672.8,99.2 673.2,99.5 673.6,99.8 674.0,100.0 674.3,100.3 674.7,100.6 675.1,100.9 675.5,101.2 675.9,101.5 676.2,101.8 676.6,102.1 677.0,102.4 677.4,102.7 677.8,103.0 678.1,103.3 678.5,103.6 678.9,104.0 679.3,104.3 679.7,104.6 680.1,104.9 680.4,105.3 680.8,105.6 681.2,105.9 681.6,106.3 682.0,106.6 682.3,107.0 682.7,107.3 683.1,107.7 683.5,108.1 683.9,108.4 684.3,108.8 684.6,109.2 685.0,109.5 685.4,109.9 685.8,110.3 686.2,110.7 686.5,111.1 686.9,111.5 687.3,111.9 687.7,112.3 688.1,112.7 688.4,113.1 688.8,113.5 689.2,113.9 689.6,114.3 690.0,114.8 690.4,115.2 690.7,115.6 691.1,116.1 691.5,116.5 691.9,117.0 692.3,117.4 692.6,117.9 693.0,118.3 693.4,118.8 693.8,119.2 694.2,119.7 694.5,120.2 694.9,120.7 695.3,121.1 695.7,121.6 696.1,122.1 696.5,122.6 696.8,123.1 697.2,123.6 697.6,124.1 698.0,124.6 698.4,125.1 698.7,125.6 699.1,126.2 699.5,126.7 699.9,127.2 700.3,127.7 700.6,128.3 701.0,128.8 701.4,129.4 701.8,129.9 702.2,130.5 702.6,131.0 702.9,131.6 703.3,132.1 703.7,132.7 704.1,133.3 704.5,133.9 704.8,134.4 705.2,135.0 705.6,135.6 706.0,136.2 706.4,136.8 706.7,137.4 707.1,138.0 707.5,138.6 707.9,139.2 708.3,139.8 708.7,140.4 709.0,141.0 709.4,141.7 709.8,142.3 710.2,142.9 710.6,143.5 710.9,144.2 711.3,144.8 711.7,145.4 712.1,146.1 712.5,146.7 712.8,147.4 713.2,148.0 713.6,148.7 714.0,149.3 714.4,150.0 714.8,150.7 715.1,151.3 715.5,152.0 715.9,152.7 716.3,153.3 716.7,154.0 717.0,154.7 717.4,155.3 717.8,156.0 718.2,156.7 718.6,157.4 719.0,158.1 719.3,158.7 719.7,159.4 720.1,160.1 720.5,160.8 720.9,161.5 721.2,162.2 721.6,162.9 722.0,163.6 722.4,164.3 722.8,165.0 723.1,165.7 723.5,166.4 723.9,167.0 724.3,167.7 724.7,168.4 725.1,169.1 725.4,169.8 725.8,170.5 726.2,171.2 726.6,171.9 727.0,172.6 727.3,173.3 727.7,174.0 728.1,174.7 728.5,175.4 728.9,176.1 729.2,176.8 729.6,177.5 730.0,178.2 730.4,178.9 730.8,179.5 731.2,180.2 731.5,180.9 731.9,181.6 732.3,182.3 732.7,183.0 733.1,183.7 733.4,184.3 733.8,185.0 734.2,185.7 734.6,186.4 735.0,187.0 735.3,187.7 735.7,188.4 736.1,189.0 736.5,189.7 736.9,190.3 737.3,191.0 737.6,191.6 738.0,192.3 738.4,192.9 738.8,193.6 739.2,194.2 739.5,194.9 739.9,195.5 740.3,196.1 740.7,196.8 741.1,197.4 741.4,198.0 741.8,198.6 742.2,199.3 742.6,199.9 743.0,200.5 743.4,201.1 743.7,201.7 744.1,202.3 744.5,202.9 744.9,203.5 745.3,204.1 745.6,204.7 746.0,205.3 746.4,205.8 746.8,206.4 747.2,207.0 747.5,207.6 747.9,208.1 748.3,208.7 748.7,209.2 749.1,209.8 749.5,210.3 749.8,210.9 750.2,211.4 750.6,212.0 751.0,212.5 751.4,213.0 751.7,213.5 752.1,214.1 752.5,214.6 752.9,215.1 753.3,215.6 753.7,216.1 754.0,216.6 754.4,217.1 754.8,217.6 755.2,218.1 755.6,218.6 755.9,219.1 756.3,219.5 756.7,220.0 757.1,220.5 757.5,220.9 757.8,221.4 758.2,221.9 758.6,222.3 759.0,222.8 759.4,223.2 759.8,223.6 760.1,224.1 760.5,224.5 760.9,224.9 761.3,225.4 761.7,225.8 762.0,226.2 762.4,226.6 762.8,227.0 763.2,227.4 763.6,227.8 763.9,228.2 764.3,228.6 764.7,229.0 765.1,229.4 765.5,229.8 765.9,230.2 766.2,230.6 766.6,230.9 767.0,231.3 767.4,231.7 767.8,232.0 768.1,232.4 768.5,232.7 768.9,233.1 769.3,233.4 769.7,233.8 770.0,234.1 770.4,234.5 770.8,234.8 771.2,235.1 771.6,235.5 772.0,235.8 772.3,236.1 772.7,236.4 773.1,236.7 773.5,237.0 773.9,237.4 774.2,237.7 774.6,238.0 775.0,238.3 775.4,238.6 775.8,238.8 776.1,239.1 776.5,239.4 776.9,239.7 777.3,240.0 777.7,240.3 778.1,240.5 778.4,240.8 778.8,241.1 779.2,241.3 779.6,241.6 780.0,241.9 780.3,242.1 780.7,242.4 781.1,242.6 781.5,242.9 781.9,243.1 782.2,243.4 782.6,243.6 783.0,243.9 783.4,244.1 783.8,244.3 784.2,244.6 784.5,244.8 784.9,245.0 785.3,245.2 785.7,245.5 786.1,245.7 786.4,245.9 786.8,246.1 787.2,246.3 787.6,246.5 788.0,246.7 788.3,246.9 788.7,247.1 789.1,247.3 789.5,247.5 789.9,247.7 790.3,247.9 790.6,248.1 791.0,248.3 791.4,248.5 791.8,248.7 792.2,248.9 792.5,249.1 792.9,249.2 793.3,249.4 793.7,249.6 794.1,249.8 794.5,249.9 794.8,250.1 795.2,250.3 795.6,250.4 796.0,250.6 796.4,250.8 796.7,250.9 797.1,251.1 797.5,251.2 797.9,251.4 798.3,251.5 798.6,251.7 799.0,251.8 799.4,252.0 799.8,252.1 800.2,252.3 800.6,252.4 800.9,252.6 801.3,252.7 801.7,252.8 802.1,253.0 802.5,253.1 802.8,253.3 803.2,253.4 803.6,253.5 804.0,253.6 804.4,253.8 804.7,253.9 805.1,254.0 805.5,254.2 805.9,254.3 806.3,254.4 806.7,254.5 807.0,254.6 807.4,254.8 807.8,254.9 808.2,255.0 808.6,255.1 808.9,255.2 809.3,255.3 809.7,255.4 810.1,255.5 810.5,255.6 810.8,255.7 811.2,255.9 811.6,256.0 812.0,256.1 812.4,256.2 812.8,256.3 813.1,256.4 813.5,256.5 813.9,256.5 814.3,256.6 814.7,256.7 815.0,256.8 815.4,256.9 815.8,257.0 816.2,257.1 816.6,257.2 816.9,257.3 817.3,257.4 817.7,257.5 818.1,257.5 818.5,257.6 818.9,257.7 819.2,257.8 819.6,257.9 820.0,258.0 820.4,258.0 820.8,258.1 821.1,258.2 821.5,258.3 821.9,258.3 822.3,258.4 822.7,258.5 823.0,258.6 823.4,258.6 823.8,258.7 824.2,258.8 824.6,258.8 825.0,258.9 825.3,259.0 825.7,259.1 826.1,259.1 826.5,259.2 826.9,259.2 827.2,259.3 827.6,259.4 828.0,259.4 828.4,259.5 828.8,259.6 829.2,259.6 829.5,259.7 829.9,259.7 830.3,259.8 830.7,259.9 831.1,259.9 831.4,260.0 831.8,260.0 832.2,260.1 832.6,260.1 833.0,260.2 833.3,260.3 833.7,260.3 834.1,260.4 834.5,260.4 834.9,260.5 835.3,260.5 835.6,260.6 836.0,260.6 836.4,260.7 836.8,260.7 837.2,260.8 837.5,260.8 837.9,260.9 838.3,260.9 838.7,260.9 839.1,261.0 839.4,261.0 839.8,261.1 840.2,261.1 840.6,261.2 841.0,261.2 841.4,261.2 841.7,261.3 842.1,261.3 842.5,261.4 842.9,261.4 843.3,261.5 843.6,261.5 844.0,261.5 844.4,261.6 844.8,261.6 845.2,261.6 845.5,261.7 845.9,261.7 846.3,261.8 846.7,261.8 847.1,261.8 847.5,261.9 847.8,261.9 848.2,261.9 848.6,262.0 849.0,262.0 849.4,262.0 849.7,262.1 850.1,262.1 850.5,262.1 850.9,262.2 851.3,262.2 851.6,262.2 852.0,262.3 852.4,262.3 852.8,262.3 853.2,262.3 853.6,262.4 853.9,262.4 854.3,262.4 854.7,262.5 855.1,262.5 855.5,262.5 855.8,262.5 856.2,262.6 856.6,262.6 857.0,262.6 857.4,262.6 857.7,262.7 858.1,262.7 858.5,262.7 858.9,262.8 859.3,262.8 859.7,262.8 860.0,262.8 860.4,262.8 860.8,262.9 861.2,262.9 861.6,262.9 861.9,262.9 862.3,263.0 862.7,263.0 863.1,263.0 863.5,263.0 863.9,263.0 864.2,263.1 864.6,263.1 865.0,263.1 865.4,263.1 865.8,263.2 866.1,263.2 866.5,263.2 866.9,263.2 867.3,263.2 867.7,263.3 868.0,263.3 868.4,263.3 868.8,263.3 869.2,263.3 869.6,263.3 870.0,263.4 870.3,263.4 870.7,263.4 871.1,263.4 871.5,263.4 871.9,263.4 872.2,263.5 872.6,263.5 873.0,263.5 873.4,263.5 873.8,263.5 874.1,263.5 874.5,263.6 874.9,263.6 875.3,263.6 875.7,263.6 876.1,263.6 876.4,263.6 876.8,263.6 877.2,263.7 877.6,263.7 878.0,263.7 878.3,263.7 878.7,263.7 879.1,263.7 879.5,263.7 879.9,263.8 880.2,263.8 880.6,263.8 881.0,263.8 881.4,263.8 881.8,263.8 882.2,263.8 882.5,263.8 882.9,263.9 883.3,263.9 883.7,263.9 884.1,263.9 884.4,263.9 884.8,263.9 885.2,263.9 885.6,263.9 886.0,264.0 886.3,264.0 886.7,264.0 887.1,264.0 887.5,264.0 887.9,264.0 888.3,264.0 888.6,264.0 889.0,264.0 889.4,264.0 889.8,264.1 890.2,264.1 890.5,264.1 890.9,264.1 891.3,264.1 891.7,264.1 892.1,264.1 892.4,264.1 892.8,264.1 893.2,264.1 893.6,264.1 894.0,264.2 894.4,264.2 894.7,264.2 895.1,264.2 895.5,264.2 895.9,264.2 896.3,264.2 896.6,264.2 897.0,264.2 897.4,264.2 897.8,264.2 898.2,264.2 898.6,264.3 898.9,264.3 899.3,264.3 899.7,264.3 900.1,264.3 900.5,264.3 900.8,264.3 901.2,264.3 901.6,264.3 902.0,264.3 902.4,264.3 902.7,264.3 903.1,264.3 903.5,264.3 903.9,264.3 904.3,264.4 904.7,264.4 905.0,264.4 905.4,264.4 905.8,264.4 906.2,264.4 906.6,264.4 906.9,264.4 907.3,264.4 907.7,264.4 908.1,264.4 908.5,264.4 908.8,264.4 909.2,264.4 909.6,264.4 910.0,264.4 910.4,264.4 910.8,264.5 911.1,264.5 911.5,264.5 911.9,264.5 912.3,264.5 912.7,264.5 913.0,264.5 913.4,264.5 913.8,264.5 914.2,264.5 914.6,264.5 914.9,264.5 915.3,264.5 915.7,264.5 916.1,264.5 916.5,264.5 916.9,264.5 917.2,264.5 917.6,264.5 918.0,264.5 918.4,264.5 918.8,264.5 919.1,264.6 919.5,264.6 919.9,264.6 920.3,264.6 920.7,264.6 921.0,264.6 921.4,264.6 921.8,264.6 922.2,264.6 922.6,264.6 923.0,264.6 923.3,264.6 923.7,264.6 924.1,264.6 924.5,264.6 924.9,264.6 925.2,264.6 925.6,264.6 926.0,264.6 926.4,264.6 926.8,264.6 927.1,264.6 927.5,264.6 927.9,264.6 928.3,264.6 928.7,264.6 929.1,264.6 929.4,264.6 929.8,264.6 930.2,264.7 930.6,264.7 931.0,264.7 931.3,264.7 931.7,264.7 932.1,264.7 932.5,264.7 932.9,264.7 933.3,264.7 933.6,264.7 934.0,264.7 934.4,264.7 934.8,264.7 935.2,264.7 935.5,264.7 935.9,264.7 936.3,264.7 936.7,264.7 937.1,264.7 937.4,264.7 937.8,264.7 938.2,264.7 938.6,264.7 939.0,264.7 939.4,264.7 939.7,264.7 940.1,264.7 940.5,264.7 940.9,264.7 941.3,264.7 941.6,264.7 942.0,264.7 942.4,264.7 942.8,264.7 943.2,264.7 943.5,264.7 943.9,264.7 944.3,264.7 944.7,264.7 945.1,264.7 945.5,264.7 945.8,264.7 946.2,264.7 946.6,264.7 947.0,264.7 947.4,264.8 947.7,264.8 948.1,264.8 948.5,264.8 948.9,264.8 949.3,264.8 949.6,264.8 950.0,264.8 950.4,264.8 950.8,264.8 951.2,264.8 951.6,264.8 951.9,264.8 952.3,264.8 952.7,264.8 953.1,264.8 953.5,264.8 953.8,264.8 954.2,264.8 954.6,264.8 955.0,264.8 955.4,264.8 955.7,264.8 956.1,264.8 956.5,264.8 956.9,264.8 957.3,264.8 957.7,264.8 958.0,264.8 958.4,264.8 958.8,264.8 959.2,264.8 959.6,264.8 959.9,264.8 960.3,264.8 960.7,264.8 961.1,264.8 961.5,264.8 961.8,264.8 962.2,264.8 962.6,264.8 963.0,264.8 963.4,264.8 963.8,264.8 964.1,264.8 964.5,264.8 964.9,264.8 965.3,264.8 965.7,264.8 966.0,264.8 966.4,264.8 966.8,264.8 967.2,264.8 967.6,264.8 968.0,264.8 968.3,264.8 968.7,264.8 969.1,264.8 969.5,264.8 969.9,264.8 970.2,264.8 970.6,264.8 971.0,264.8 971.4,264.8 971.8,264.8 972.1,264.8 972.5,264.8 972.9,264.8 973.3,264.8 973.7,264.8 974.1,264.8 974.4,264.8 974.8,264.8 975.2,264.8 975.6,264.8 976.0,264.8 976.3,264.8 976.7,264.8 977.1,264.8 977.5,264.8 977.9,264.8 978.2,264.8 978.6,264.8 979.0,264.8 979.4,264.8 979.8,264.8 980.2,264.8 980.5,264.8 980.9,264.8 981.3,264.8 981.7,264.8 982.1,264.8 982.4,264.8 982.8,264.8 983.2,264.8 983.6,264.9 984.0,264.9 984.3,264.9 984.7,264.9 985.1,264.9 985.5,264.9 985.9,264.9 986.3,264.9 986.6,264.9 987.0,264.9 987.4,264.9 987.8,264.9 988.2,264.9 988.5,264.9 988.9,264.9 989.3,264.9 989.7,264.9 990.1,264.9 990.4,264.9 990.8,264.9 991.2,264.9 991.6,264.9 992.0,264.9 992.4,264.9 992.7,264.9 993.1,264.9 993.5,264.9 993.9,264.9 994.3,264.9 994.6,264.9 995.0,264.9 995.4,264.9 995.8,264.9 996.2,264.9 996.5,264.9 996.9,264.9 997.3,264.9 997.7,264.9 998.1,264.9 998.5,264.9 998.8,264.9 999.2,264.9 999.6,264.9" fill="none" stroke="#00e000" stroke-width="1.3" stroke-dasharray="1.1 1.1"/>
</g>
<rect x="6" y="300" width="501" height="212" fill="url(#g1)"/>
<rect x="517" y="300" width="501" height="212" fill="url(#g2)"/>
<g clip-path="url(#c3)"><g fill="none" stroke="#0000ff" stroke-width="2" stroke-linejoin="miter"><polyline points="34.70,381.00 69.22,381.00"/><polyline points="103.73,381.00 124.44,381.00"/><polyline points="124.44,381.00 138.25,381.00"/><polyline points="172.76,381.00 186.57,381.00"/><polyline points="186.57,381.00 200.37,381.00"/><polyline points="234.89,381.00 248.69,381.00"/><polyline points="248.69,381.00 262.50,381.00"/><polyline points="297.01,381.00 310.82,381.00"/><polyline points="310.82,381.00 324.63,381.00"/><polyline points="359.14,381.00 372.95,381.00"/><polyline points="372.95,381.00 386.75,381.00"/><polyline points="421.27,381.00 435.07,381.00"/><polyline points="435.07,381.00 448.88,381.00"/><polyline points="476.49,381.00 490.30,381.00 490.30,443.13 34.70,443.13"/><polyline points="124.44,381.00 124.44,408.61"/><polyline points="124.44,436.22 124.44,443.13"/><polyline points="186.57,381.00 186.57,408.61"/><polyline points="186.57,436.22 186.57,443.13"/><polyline points="248.69,381.00 248.69,408.61"/><polyline points="248.69,436.22 248.69,443.13"/><polyline points="310.82,381.00 310.82,408.61"/><polyline points="310.82,436.22 310.82,443.13"/><polyline points="372.95,381.00 372.95,408.61"/><polyline points="372.95,436.22 372.95,443.13"/><polyline points="435.07,381.00 435.07,408.61"/><polyline points="435.07,436.22 435.07,443.13"/><polyline points="34.70,381.00 34.70,394.81"/><polyline points="34.70,429.32 34.70,456.93"/><polygon points="27.80,456.93 41.60,456.93 34.70,463.84"/></g><g fill="none" stroke="#000080" stroke-width="2"><polyline points="69.22,381.00 72.67,381.00 76.12,374.10 83.02,387.90 89.92,374.10 96.83,387.90 100.28,381.00 103.73,381.00"/><polyline points="138.25,381.00 141.70,381.00 145.15,374.10 152.05,387.90 158.95,374.10 165.86,387.90 169.31,381.00 172.76,381.00"/><polyline points="200.37,381.00 203.82,381.00 207.28,374.10 214.18,387.90 221.08,374.10 227.98,387.90 231.44,381.00 234.89,381.00"/><polyline points="262.50,381.00 265.95,381.00 269.40,374.10 276.30,387.90 283.21,374.10 290.11,387.90 293.56,381.00 297.01,381.00"/><polyline points="324.63,381.00 328.08,381.00 331.53,374.10 338.43,387.90 345.33,374.10 352.24,387.90 355.69,381.00 359.14,381.00"/><polyline points="386.75,381.00 390.20,381.00 393.66,374.10 400.56,387.90 407.46,374.10 414.37,387.90 417.82,381.00 421.27,381.00"/><path d="M448.88,381.00 H460.96 M460.96,374.10 V387.90 M464.41,374.10 V387.90 M464.41,381.00 H476.49"/><path d="M124.44,408.61 V420.69 M117.54,420.69 H131.34 M117.54,424.14 H131.34 M124.44,424.14 V436.22"/><path d="M186.57,408.61 V420.69 M179.66,420.69 H193.47 M179.66,424.14 H193.47 M186.57,424.14 V436.22"/><path d="M248.69,408.61 V420.69 M241.79,420.69 H255.60 M241.79,424.14 H255.60 M248.69,424.14 V436.22"/><path d="M310.82,408.61 V420.69 M303.92,420.69 H317.72 M303.92,424.14 H317.72 M310.82,424.14 V436.22"/><path d="M372.95,408.61 V420.69 M366.04,420.69 H379.85 M366.04,424.14 H379.85 M372.95,424.14 V436.22"/><path d="M435.07,408.61 V420.69 M428.17,420.69 H441.98 M428.17,424.14 H441.98 M435.07,424.14 V436.22"/><path d="M34.70,394.81 V399.12 M34.70,426.73 V429.32 M30.82,404.73 H38.58 M34.70,400.85 V408.61 M30.39,421.56 H39.01" stroke-width="2.2"/><circle cx="34.70" cy="412.93" r="13.81" stroke-width="2.3"/></g><g fill="#0000ff"><rect x="121.94" y="378.50" width="5" height="5"/><rect x="121.94" y="440.63" width="5" height="5"/><rect x="184.07" y="378.50" width="5" height="5"/><rect x="184.07" y="440.63" width="5" height="5"/><rect x="246.19" y="378.50" width="5" height="5"/><rect x="246.19" y="440.63" width="5" height="5"/><rect x="308.32" y="378.50" width="5" height="5"/><rect x="308.32" y="440.63" width="5" height="5"/><rect x="370.45" y="378.50" width="5" height="5"/><rect x="370.45" y="440.63" width="5" height="5"/><rect x="432.57" y="378.50" width="5" height="5"/><rect x="432.57" y="440.63" width="5" height="5"/><rect x="32.20" y="440.63" width="5" height="5"/></g><g fill="#000" stroke="#000" stroke-width="0.3" font-family="Liberation Sans" font-weight="bold"><text transform="translate(86.47,369.20) scale(1,0.88)" text-anchor="middle" font-size="10.2" dominant-baseline="central">R8</text><text transform="translate(86.47,395.40) scale(1,0.88)" text-anchor="middle" font-size="10.2" dominant-baseline="central">1k</text><text transform="translate(155.50,369.20) scale(1,0.88)" text-anchor="middle" font-size="10.2" dominant-baseline="central">R9</text><text transform="translate(155.50,395.40) scale(1,0.88)" text-anchor="middle" font-size="10.2" dominant-baseline="central">300</text><text transform="translate(217.63,369.20) scale(1,0.88)" text-anchor="middle" font-size="10.2" dominant-baseline="central">R10</text><text transform="translate(217.63,395.40) scale(1,0.88)" text-anchor="middle" font-size="10.2" dominant-baseline="central">300</text><text transform="translate(279.76,369.20) scale(1,0.88)" text-anchor="middle" font-size="10.2" dominant-baseline="central">R11</text><text transform="translate(279.76,395.40) scale(1,0.88)" text-anchor="middle" font-size="10.2" dominant-baseline="central">300</text><text transform="translate(341.88,369.20) scale(1,0.88)" text-anchor="middle" font-size="10.2" dominant-baseline="central">R12</text><text transform="translate(341.88,395.40) scale(1,0.88)" text-anchor="middle" font-size="10.2" dominant-baseline="central">300</text><text transform="translate(404.01,369.20) scale(1,0.88)" text-anchor="middle" font-size="10.2" dominant-baseline="central">R13</text><text transform="translate(404.01,395.40) scale(1,0.88)" text-anchor="middle" font-size="10.2" dominant-baseline="central">300</text><text transform="translate(462.69,369.40) scale(1,0.88)" text-anchor="middle" font-size="10.2" dominant-baseline="central">C5</text><text transform="translate(462.69,394.80) scale(1,0.88)" text-anchor="middle" font-size="10.2" dominant-baseline="central">10p</text><text transform="translate(127.89,412.66) scale(1,0.88)" text-anchor="start" font-size="10.2" dominant-baseline="central">C7</text><text transform="translate(127.89,433.37) scale(1,0.88)" text-anchor="start" font-size="10.2" dominant-baseline="central">10n</text><text transform="translate(190.02,412.66) scale(1,0.88)" text-anchor="start" font-size="10.2" dominant-baseline="central">C6</text><text transform="translate(190.02,433.37) scale(1,0.88)" text-anchor="start" font-size="10.2" dominant-baseline="central">10n</text><text transform="translate(252.14,412.66) scale(1,0.88)" text-anchor="start" font-size="10.2" dominant-baseline="central">C1</text><text transform="translate(252.14,433.37) scale(1,0.88)" text-anchor="start" font-size="10.2" dominant-baseline="central">10n</text><text transform="translate(314.27,412.66) scale(1,0.88)" text-anchor="start" font-size="10.2" dominant-baseline="central">C2</text><text transform="translate(314.27,433.37) scale(1,0.88)" text-anchor="start" font-size="10.2" dominant-baseline="central">10n</text><text transform="translate(376.40,412.66) scale(1,0.88)" text-anchor="start" font-size="10.2" dominant-baseline="central">C3</text><text transform="translate(376.40,433.37) scale(1,0.88)" text-anchor="start" font-size="10.2" dominant-baseline="central">10n</text><text transform="translate(438.53,412.66) scale(1,0.88)" text-anchor="start" font-size="10.2" dominant-baseline="central">C4</text><text transform="translate(438.53,433.37) scale(1,0.88)" text-anchor="start" font-size="10.2" dominant-baseline="central">10n</text><text transform="translate(45.05,395.41) scale(1,0.88)" text-anchor="start" font-size="10.2" dominant-baseline="central">V1</text><text transform="translate(50.23,429.92) scale(1,0.88)" text-anchor="start" font-size="10.2" dominant-baseline="central">AC 1</text><text transform="translate(34.90,354.20) scale(1,0.88)" text-anchor="start" font-size="10.4" dominant-baseline="central">.ac dec 1000 10 10Meg</text></g><polygon points="17.1,374.8 28.5,374.8 34.7,381.0 28.5,387.2 17.1,387.2" fill="none" stroke="#0000ff" stroke-width="2"/><text x="20.0" y="382.0" font-size="9.8" font-family="Liberation Sans" font-weight="bold" stroke="#000" stroke-width="0.3" dominant-baseline="central">in</text></g>
<g clip-path="url(#c4)"><g fill="none" stroke="#0000ff" stroke-width="2" stroke-linejoin="miter"><polyline points="585.40,378.40 610.12,378.40"/><polyline points="641.02,378.40 943.84,378.40 943.84,378.40"/><polyline points="665.74,434.02 665.74,440.20"/><polyline points="721.36,434.02 721.36,440.20"/><polyline points="776.98,434.02 776.98,440.20"/><polyline points="832.60,434.02 832.60,440.20"/><polyline points="888.22,434.02 888.22,440.20"/><polyline points="943.84,434.02 943.84,440.20"/><polyline points="943.84,440.20 585.40,440.20"/><polyline points="585.40,378.40 585.40,390.76"/><polyline points="585.40,421.66 585.40,452.56"/><polygon points="579.22,452.56 591.58,452.56 585.40,458.74"/></g><g fill="none" stroke="#000080" stroke-width="2"><polyline points="610.12,378.40 613.21,378.40 616.30,372.22 622.48,384.58 628.66,372.22 634.84,384.58 637.93,378.40 641.02,378.40"/><polyline points="665.74,378.40 665.74,381.49 671.92,384.58 659.56,390.76 671.92,396.94 659.56,403.12 665.74,406.21 665.74,409.30"/><path d="M665.74,409.30 V420.11 M659.56,420.11 H671.92 M659.56,423.20 H671.92 M665.74,423.20 V434.02"/><polyline points="721.36,378.40 721.36,381.49 727.54,384.58 715.18,390.76 727.54,396.94 715.18,403.12 721.36,406.21 721.36,409.30"/><path d="M721.36,409.30 V420.11 M715.18,420.11 H727.54 M715.18,423.20 H727.54 M721.36,423.20 V434.02"/><polyline points="776.98,378.40 776.98,381.49 783.16,384.58 770.80,390.76 783.16,396.94 770.80,403.12 776.98,406.21 776.98,409.30"/><path d="M776.98,409.30 V420.11 M770.80,420.11 H783.16 M770.80,423.20 H783.16 M776.98,423.20 V434.02"/><polyline points="832.60,378.40 832.60,381.49 838.78,384.58 826.42,390.76 838.78,396.94 826.42,403.12 832.60,406.21 832.60,409.30"/><path d="M832.60,409.30 V420.11 M826.42,420.11 H838.78 M826.42,423.20 H838.78 M832.60,423.20 V434.02"/><polyline points="888.22,378.40 888.22,381.49 894.40,384.58 882.04,390.76 894.40,396.94 882.04,403.12 888.22,406.21 888.22,409.30"/><path d="M888.22,409.30 V420.11 M882.04,420.11 H894.40 M882.04,423.20 H894.40 M888.22,423.20 V434.02"/><polyline points="943.84,378.40 943.84,381.49 950.02,384.58 937.66,390.76 950.02,396.94 937.66,403.12 943.84,406.21 943.84,409.30"/><path d="M943.84,409.30 V420.11 M937.66,420.11 H950.02 M937.66,423.20 H950.02 M943.84,423.20 V434.02"/><path d="M585.40,390.76 V393.85 M585.40,418.57 V421.66 M581.92,398.87 H588.88 M585.40,395.39 V402.35 M581.54,413.94 H589.26" stroke-width="2.2"/><circle cx="585.40" cy="406.21" r="12.36" stroke-width="2.0"/></g><g fill="#0000ff"><rect x="663.24" y="375.90" width="5" height="5"/><rect x="663.24" y="437.70" width="5" height="5"/><rect x="718.86" y="375.90" width="5" height="5"/><rect x="718.86" y="437.70" width="5" height="5"/><rect x="774.48" y="375.90" width="5" height="5"/><rect x="774.48" y="437.70" width="5" height="5"/><rect x="830.10" y="375.90" width="5" height="5"/><rect x="830.10" y="437.70" width="5" height="5"/><rect x="885.72" y="375.90" width="5" height="5"/><rect x="885.72" y="437.70" width="5" height="5"/><rect x="582.90" y="437.70" width="5" height="5"/></g><g fill="#000" stroke="#000" stroke-width="0.3" font-family="Liberation Sans" font-weight="bold"><text transform="translate(625.57,368.30) scale(1,0.88)" text-anchor="middle" font-size="9.7" dominant-baseline="central">R8</text><text transform="translate(625.57,391.30) scale(1,0.88)" text-anchor="middle" font-size="9.7" dominant-baseline="central">1k</text><text transform="translate(673.47,388.17) scale(1,0.88)" text-anchor="start" font-size="9.7" dominant-baseline="central">R7</text><text transform="translate(673.47,402.07) scale(1,0.88)" text-anchor="start" font-size="9.7" dominant-baseline="central">300</text><text transform="translate(668.83,412.89) scale(1,0.88)" text-anchor="start" font-size="9.7" dominant-baseline="central">C7</text><text transform="translate(668.83,431.43) scale(1,0.88)" text-anchor="start" font-size="9.7" dominant-baseline="central">10n</text><text transform="translate(729.08,388.17) scale(1,0.88)" text-anchor="start" font-size="9.7" dominant-baseline="central">R6</text><text transform="translate(729.08,402.07) scale(1,0.88)" text-anchor="start" font-size="9.7" dominant-baseline="central">290</text><text transform="translate(724.45,412.89) scale(1,0.88)" text-anchor="start" font-size="9.7" dominant-baseline="central">C6</text><text transform="translate(724.45,431.43) scale(1,0.88)" text-anchor="start" font-size="9.7" dominant-baseline="central">10n</text><text transform="translate(784.71,388.17) scale(1,0.88)" text-anchor="start" font-size="9.7" dominant-baseline="central">R1</text><text transform="translate(784.71,402.07) scale(1,0.88)" text-anchor="start" font-size="9.7" dominant-baseline="central">280</text><text transform="translate(780.07,412.89) scale(1,0.88)" text-anchor="start" font-size="9.7" dominant-baseline="central">C1</text><text transform="translate(780.07,431.43) scale(1,0.88)" text-anchor="start" font-size="9.7" dominant-baseline="central">10n</text><text transform="translate(840.32,388.17) scale(1,0.88)" text-anchor="start" font-size="9.7" dominant-baseline="central">R2</text><text transform="translate(840.32,402.07) scale(1,0.88)" text-anchor="start" font-size="9.7" dominant-baseline="central">310</text><text transform="translate(835.69,412.89) scale(1,0.88)" text-anchor="start" font-size="9.7" dominant-baseline="central">C2</text><text transform="translate(835.69,431.43) scale(1,0.88)" text-anchor="start" font-size="9.7" dominant-baseline="central">10n</text><text transform="translate(895.95,388.17) scale(1,0.88)" text-anchor="start" font-size="9.7" dominant-baseline="central">R3</text><text transform="translate(895.95,402.07) scale(1,0.88)" text-anchor="start" font-size="9.7" dominant-baseline="central">320</text><text transform="translate(891.31,412.89) scale(1,0.88)" text-anchor="start" font-size="9.7" dominant-baseline="central">C3</text><text transform="translate(891.31,431.43) scale(1,0.88)" text-anchor="start" font-size="9.7" dominant-baseline="central">10n</text><text transform="translate(951.56,388.17) scale(1,0.88)" text-anchor="start" font-size="9.7" dominant-baseline="central">R4</text><text transform="translate(951.56,402.07) scale(1,0.88)" text-anchor="start" font-size="9.7" dominant-baseline="central">300</text><text transform="translate(946.93,412.89) scale(1,0.88)" text-anchor="start" font-size="9.7" dominant-baseline="central">C4</text><text transform="translate(946.93,431.43) scale(1,0.88)" text-anchor="start" font-size="9.7" dominant-baseline="central">10n</text><text transform="translate(594.67,391.26) scale(1,0.88)" text-anchor="start" font-size="9.7" dominant-baseline="central">V1</text><text transform="translate(599.69,419.46) scale(1,0.88)" text-anchor="start" font-size="9.7" dominant-baseline="central">AC 1</text><text transform="translate(585.80,353.80) scale(1,0.88)" text-anchor="start" font-size="9.6" dominant-baseline="central">.ac dec 1000 10 10Meg</text></g><polygon points="568.6,372.9 579.9,372.9 585.4,378.4 579.9,383.9 568.6,383.9" fill="none" stroke="#0000ff" stroke-width="2"/><text x="571.2" y="379.4" font-size="9.0" font-family="Liberation Sans" font-weight="bold" stroke="#000" stroke-width="0.3" dominant-baseline="central">in</text></g>
</svg>
<div class="yl" style="left:0px;width:27.4px;top:69.9px">110dB</div>
<div class="yr" style="left:492.6px;width:12.0px;top:69.9px">90°</div>
<div class="yl" style="left:0px;width:27.4px;top:88.9px">105dB</div>
<div class="yr" style="left:492.6px;width:12.0px;top:88.9px">81°</div>
<div class="yl" style="left:0px;width:27.4px;top:107.9px">100dB</div>
<div class="yr" style="left:492.6px;width:12.0px;top:107.9px">72°</div>
<div class="yl" style="left:0px;width:27.4px;top:126.9px">95dB</div>
<div class="yr" style="left:492.6px;width:12.0px;top:126.9px">63°</div>
<div class="yl" style="left:0px;width:27.4px;top:145.9px">90dB</div>
<div class="yr" style="left:492.6px;width:12.0px;top:145.9px">54°</div>
<div class="yl" style="left:0px;width:27.4px;top:164.9px">85dB</div>
<div class="yr" style="left:492.6px;width:12.0px;top:164.9px">45°</div>
<div class="yl" style="left:0px;width:27.4px;top:183.9px">80dB</div>
<div class="yr" style="left:492.6px;width:12.0px;top:183.9px">36°</div>
<div class="yl" style="left:0px;width:27.4px;top:202.9px">75dB</div>
<div class="yr" style="left:492.6px;width:12.0px;top:202.9px">27°</div>
<div class="yl" style="left:0px;width:27.4px;top:221.9px">70dB</div>
<div class="yr" style="left:492.6px;width:12.0px;top:221.9px">18°</div>
<div class="yl" style="left:0px;width:27.4px;top:240.9px">65dB</div>
<div class="yr" style="left:492.6px;width:12.0px;top:240.9px">9°</div>
<div class="yl" style="left:0px;width:27.4px;top:259.9px">60dB</div>
<div class="yr" style="left:492.6px;width:12.0px;top:259.9px">0°</div>
<div class="xl" style="left:11.4px;top:268.5px">10Hz</div>
<div class="xl" style="left:87.6px;top:268.5px">100Hz</div>
<div class="xl" style="left:163.8px;top:268.5px">1KHz</div>
<div class="xl" style="left:240.0px;top:268.5px">10KHz</div>
<div class="xl" style="left:316.2px;top:268.5px">100KHz</div>
<div class="xl" style="left:392.4px;top:268.5px">1MHz</div>
<div class="xl" style="left:468.6px;top:268.5px">10MHz</div><div class="yl" style="left:511px;width:27.4px;top:69.9px">110dB</div>
<div class="yr" style="left:1003.6px;width:12.0px;top:69.9px">90°</div>
<div class="yl" style="left:511px;width:27.4px;top:88.9px">105dB</div>
<div class="yr" style="left:1003.6px;width:12.0px;top:88.9px">81°</div>
<div class="yl" style="left:511px;width:27.4px;top:107.9px">100dB</div>
<div class="yr" style="left:1003.6px;width:12.0px;top:107.9px">72°</div>
<div class="yl" style="left:511px;width:27.4px;top:126.9px">95dB</div>
<div class="yr" style="left:1003.6px;width:12.0px;top:126.9px">63°</div>
<div class="yl" style="left:511px;width:27.4px;top:145.9px">90dB</div>
<div class="yr" style="left:1003.6px;width:12.0px;top:145.9px">54°</div>
<div class="yl" style="left:511px;width:27.4px;top:164.9px">85dB</div>
<div class="yr" style="left:1003.6px;width:12.0px;top:164.9px">45°</div>
<div class="yl" style="left:511px;width:27.4px;top:183.9px">80dB</div>
<div class="yr" style="left:1003.6px;width:12.0px;top:183.9px">36°</div>
<div class="yl" style="left:511px;width:27.4px;top:202.9px">75dB</div>
<div class="yr" style="left:1003.6px;width:12.0px;top:202.9px">27°</div>
<div class="yl" style="left:511px;width:27.4px;top:221.9px">70dB</div>
<div class="yr" style="left:1003.6px;width:12.0px;top:221.9px">18°</div>
<div class="yl" style="left:511px;width:27.4px;top:240.9px">65dB</div>
<div class="yr" style="left:1003.6px;width:12.0px;top:240.9px">9°</div>
<div class="yl" style="left:511px;width:27.4px;top:259.9px">60dB</div>
<div class="yr" style="left:1003.6px;width:12.0px;top:259.9px">0°</div>
<div class="xl" style="left:522.4px;top:268.5px">10Hz</div>
<div class="xl" style="left:598.6px;top:268.5px">100Hz</div>
<div class="xl" style="left:674.8px;top:268.5px">1KHz</div>
<div class="xl" style="left:751.0px;top:268.5px">10KHz</div>
<div class="xl" style="left:827.2px;top:268.5px">100KHz</div>
<div class="xl" style="left:903.4px;top:268.5px">1MHz</div>
<div class="xl" style="left:979.6px;top:268.5px">10MHz</div>
<div class="a" style="left:233.6px;top:63.9px;font-size:7.6px;line-height:9px;font-weight:bold;color:#00d800;transform:scaleX(0.915);transform-origin:0 0">conj(V(in)/I(R8))</div>
<div class="a" style="left:744.6px;top:63.9px;font-size:7.6px;line-height:9px;font-weight:bold;color:#00d800;transform:scaleX(0.915);transform-origin:0 0">conj(V(in)/I(R8))</div>
<svg class="ov" width="1024" height="300" viewBox="0 0 1024 300" style="z-index:5">
<g stroke="#c9c9c9" stroke-width="1" fill="none">
 <path d="M28.5,25 V34 M41.5,25 V34 M55.5,25 V34 M80.5,25 V34 M127.5,25 V34 M152.5,25 V34 M189.5,25 V34 M236.5,25 V34 M261.5,25 V34"/>
</g>
<path d="M440.5,23 V36" stroke="#bdbdbd" stroke-width="1"/>
<!-- new -->
<path d="M7.5,25.5 H12 L14.5,28 V33.5 H7.5 Z" fill="#fff" stroke="#9a9a9a" stroke-width="0.9"/>
<path d="M9.3,27.6 L12.8,29.6 L9.3,31.6 Z" fill="#000"/>
<!-- open -->
<path d="M18,27 H20.5 L21.5,28 H24.5 V32.8 H18 Z" fill="#9b9b2a"/>
<path d="M18.6,29.2 H26.2 L24.8,32.8 H18 Z" fill="#d6d45a"/>
<path d="M22.5,26 Q24.5,25 25.8,26.8" stroke="#666" stroke-width="0.8" fill="none"/>
<!-- save -->
<rect x="32" y="25.3" width="7.2" height="7.8" fill="#7f7f00"/>
<rect x="33.4" y="25.3" width="4.4" height="3.2" fill="#f4f4f4"/>
<rect x="33" y="30.6" width="5.2" height="2.5" fill="#111"/>
<rect x="36.6" y="31.1" width="1.2" height="1.3" fill="#bbb"/>
<!-- control panel -->
<path d="M45.3,28.6 Q49.6,24.2 53.8,28.6" fill="none" stroke="#8a8a8a" stroke-width="1.3"/>
<path d="M46,28.8 H53" stroke="#aaa" stroke-width="0.8"/>
<path d="M49,29 H50.4 L51.4,33.5 H48 Z" fill="#0a0ad0"/>
<!-- run -->
<path d="M65.6,25.8 L62.5,28.8 L58.3,31.6" stroke="#111" stroke-width="1.3" fill="none"/><path d="M60.6,27.9 L66,29.5" stroke="#222" stroke-width="0.9"/><path d="M63.3,29 V33.8" stroke="#222" stroke-width="1.1"/><circle cx="60.5" cy="26.2" r="0.8" fill="#d8d8d8"/>
<!-- halt (disabled hand) -->
<path d="M71.3,29 Q71.3,26 74,26 Q76.8,26 76.8,29 V32 Q76.8,33.8 74,33.8 Q71.3,33.8 71.3,32 Z" fill="#d4d4d4" stroke="#c6c6c6" stroke-width="0.8"/><rect x="72.2" y="30.8" width="3.8" height="1.6" fill="#f2f2f2"/>
<!-- zoom in -->
<circle cx="87.3" cy="28.6" r="2.8" fill="#5cc8c8" stroke="#222" stroke-width="1.1"/>
<path d="M85.8,28.6 H88.8 M87.3,27.1 V30.1" stroke="#111" stroke-width="0.8"/>
<path d="M89.3,30.6 L92,33.4" stroke="#111" stroke-width="1.5"/>
<!-- zoom area (disabled) -->
<circle cx="98.5" cy="28.6" r="2.8" fill="none" stroke="#c3c3c3" stroke-width="1"/>
<path d="M100.5,30.6 L103.2,33.4" stroke="#c3c3c3" stroke-width="1.3"/>
<!-- zoom out -->
<circle cx="109.5" cy="28.6" r="2.8" fill="#5cc8c8" stroke="#222" stroke-width="1.1"/>
<path d="M108,28.6 H111" stroke="#111" stroke-width="0.8"/>
<path d="M111.5,30.6 L114.2,33.4" stroke="#111" stroke-width="1.5"/>
<!-- zoom cancel -->
<circle cx="120.3" cy="28.6" r="2.8" fill="#5cc8c8" stroke="#333" stroke-width="1"/>
<path d="M122.3,30.6 L125,33.4" stroke="#111" stroke-width="1.5"/>
<path d="M117,25.5 L124,32.5 M124,25.5 L117,32.5" stroke="#f02020" stroke-width="0.9"/>
<!-- waveform -->
<rect x="131" y="25.3" width="8" height="8" fill="#e0e0e0"/>
<path d="M131.5,25 V33.5 H139" stroke="#222" stroke-width="0.9" fill="none"/>
<path d="M132,27 Q134,25 135.5,27 T139,27" stroke="#6f6fd8" stroke-width="0.9" fill="none"/>
<path d="M132,29.3 Q134,30.5 135.5,29.3 T139,29.3" stroke="#e04040" stroke-width="0.9" fill="none"/>
<path d="M132,31.6 Q134,30.5 135.5,31.8 T139,31.6" stroke="#303090" stroke-width="0.9" fill="none"/>
<!-- gray disabled -->
<path d="M143.5,26 H150.5 V33.5 H143.5 Z M145,27.5 V32" stroke="#cfcfcf" stroke-width="0.9" fill="none"/>
<!-- tile horiz -->
<rect x="155.5" y="25.5" width="8.5" height="8" fill="#fff" stroke="#3030b0" stroke-width="0.9"/>
<rect x="155.5" y="26" width="8.5" height="1.4" fill="#000090"/>
<rect x="155.5" y="29.5" width="8.5" height="1.4" fill="#000090"/>
<path d="M155.5,29.2 H164" stroke="#3030b0" stroke-width="0.8"/>
<!-- cascade -->
<rect x="166.5" y="25.5" width="5" height="3.8" fill="#fff" stroke="#3030b0" stroke-width="0.8"/>
<rect x="168.5" y="27.5" width="5" height="3.8" fill="#fff" stroke="#3030b0" stroke-width="0.8"/>
<rect x="170.5" y="29.5" width="5" height="3.8" fill="#fff" stroke="#3030b0" stroke-width="0.8"/>
<path d="M166.5,26 H171.5 M168.5,28 H173.5 M170.5,30 H175.5" stroke="#000090" stroke-width="1.1"/>
<!-- tile vert -->
<rect x="177.5" y="25.5" width="5" height="3.8" fill="#fff" stroke="#3030b0" stroke-width="0.8"/>
<rect x="179.5" y="27.5" width="5" height="3.8" fill="#fff" stroke="#3030b0" stroke-width="0.8"/>
<rect x="181" y="29.5" width="4.5" height="3.8" fill="#fff" stroke="#3030b0" stroke-width="0.8"/>
<path d="M177.5,26 H182.5 M179.5,28 H184.5 M181,30 H185.5" stroke="#000090" stroke-width="1.1"/>
<path d="M185,25 L186,26" stroke="#222" stroke-width="0.8"/>
<!-- cut -->
<path d="M195,25.5 L197.5,30 M198,25.5 L195.5,30" stroke="#444" stroke-width="0.8"/>
<circle cx="194.8" cy="32" r="1.4" fill="none" stroke="#4040c0" stroke-width="1"/>
<circle cx="198.2" cy="32" r="1.4" fill="none" stroke="#4040c0" stroke-width="1"/>
<!-- copy -->
<path d="M203.5,25.5 H207 V31.5 H203.5 Z" fill="#eee" stroke="#888" stroke-width="0.8"/>
<path d="M206.5,28 H210 L211,29 V33.5 H206.5 Z" fill="#fff" stroke="#3030b0" stroke-width="0.8"/>
<!-- paste disabled -->
<path d="M214.5,26.5 H220.5 V32.5 H214.5 Z" fill="#d8d8d8" stroke="#bbb" stroke-width="0.8"/>
<path d="M218,29.5 H222 V33.5 H218 Z" fill="#f4f4f4" stroke="#c8c8c8" stroke-width="0.8"/>
<!-- binoculars -->
<path d="M225.5,33 V29 L227,25.5 H228.5 V33 Z M232.5,33 V29 L231,25.5 H229.5 V33 Z" fill="#111"/>
<rect x="228" y="28" width="2" height="2" fill="#111"/>
<!-- print -->
<path d="M241,25.8 H246 V28 H241 Z" fill="#fff" stroke="#999" stroke-width="0.8"/>
<path d="M239.5,28.5 H247.5 V32.5 H239.5 Z" fill="#e6e6e6" stroke="#999" stroke-width="0.9"/>
<!-- print setup -->
<path d="M250.5,25.8 H257 V28 H250.5 Z" fill="#ddd" stroke="#999" stroke-width="0.8"/>
<path d="M249.5,28.5 H258 V33 H249.5 Z" fill="#d0d0d0" stroke="#999" stroke-width="0.9"/>
<rect x="252" y="30" width="3" height="1" fill="#c8c040"/>
<!-- pencil -->
<path d="M264.5,32 L270,26 L271.5,27.3 L266,33.2 Z" fill="#e8e030" stroke="#333" stroke-width="0.6"/>
<circle cx="270.8" cy="26.4" r="1" fill="#e02020"/>
<path d="M264,33.8 H272" stroke="#5050e0" stroke-width="0.9"/>
<!-- ground -->
<path d="M278,25 V28 M274.5,28.3 H281.5 L278,32.5 Z" stroke="#333" stroke-width="0.9" fill="none"/>
<!-- label -->
<rect x="285.5" y="26" width="7.5" height="4.8" rx="1" fill="#d8d8c0" stroke="#6a6a30" stroke-width="0.9"/>
<path d="M288.3,27.2 V29.5 H290.3 M289.3,30.8 V33.5" stroke="#333" stroke-width="0.7" fill="none"/>
<!-- resistor -->
<path d="M300,25.3 V26.3 L301.3,27.3 L298,29 L301.3,30.5 L298.5,32 L300,32.8 V33.8" stroke="#333" stroke-width="0.8" fill="none"/>
<!-- cap -->
<path d="M311,25 V28.5 M307.5,28.8 H314.5 M307.5,30.8 H314.5 M311,31 V34" stroke="#333" stroke-width="1" fill="none"/>
<!-- inductor -->
<path d="M321,25.5 Q324,26.5 321.5,28.5 Q324,29.5 321.5,31 Q324,32 321,33.5" stroke="#333" stroke-width="0.9" fill="none"/>
<!-- diode -->
<path d="M330,27.5 H338 L334,31.5 Z M330,32 H338 M334,25 V27.5 M334,31.5 V34" stroke="#333" stroke-width="0.9" fill="none"/>
<!-- component (opamp D) -->
<path d="M341,27.5 H342.5 M341,31 H342.5 M342.5,25.8 H345 Q348.5,29.2 345,32.5 H342.5 Z M347.5,29.2 H349" stroke="#444" stroke-width="0.9" fill="none"/>
<!-- move hand -->
<path d="M351.5,29 L352.5,26 L354,28 L354.5,25 L356,28 L357,25.5 L358,28.5 L359.5,27.5 L359,31.5 Q357.5,33.5 355,33.5 Q352.5,33 351.5,29 Z" fill="#fff" stroke="#333" stroke-width="0.8"/>
<!-- drag -->
<path d="M363.5,28 Q364.5,25.5 367,26 Q370,26 370,28.5 L369,31.5 Q367,33 365,32 Z" fill="#fff" stroke="#333" stroke-width="0.8"/>
<!-- undo -->
<path d="M375.5,28.5 Q378,25 381,27.5 Q382.5,31 379.5,32.5 Q377,33 376,31.5" stroke="#6a6a20" stroke-width="1" fill="none"/>
<path d="M374.2,27.8 L376.5,29.8 L377,27" fill="#222"/>
<!-- redo disabled -->
<path d="M391,28.5 Q388.5,25 385.5,27.5 Q384,31 387,32.5 Q389.5,33 390.5,31.5" stroke="#c8c8c8" stroke-width="1" fill="none"/>
<!-- rotate disabled -->
<path d="M395.5,33 V29.5 H397.5 M395.5,31.3 H397 M395.5,33 H397.5 M398.5,33 V30 H403.5 V33 M401,30 V33 M396.5,28 Q400,24 404.5,28" stroke="#c8c8c8" stroke-width="0.9" fill="none"/>
<!-- mirror disabled -->
<path d="M407.5,29.5 H409 M407.5,33 H409 M407.5,29.5 V33 M413.5,29.5 H415 V33 H413.5 M408.5,28 Q411,24 414,28" stroke="#c8c8c8" stroke-width="0.9" fill="none"/>
<!-- Aa -->
<text x="418.3" y="32.6" font-family="Liberation Sans" font-style="italic" font-weight="bold" font-size="7" fill="#222" textLength="8" lengthAdjust="spacingAndGlyphs">Aa</text>
<!-- .op -->
<circle cx="430.2" cy="30" r="0.5" fill="#333"/><text x="431" y="31.5" font-family="Liberation Sans" font-weight="bold" font-size="6.5" fill="#333" textLength="5.5" lengthAdjust="spacingAndGlyphs">op</text><path d="M431.9,30 V33.8" stroke="#333" stroke-width="0.9"/>
<!-- tab icons -->
<path d="M4,42.5 H6 L8.7,39.5 M6,42.5 L8.7,45.3" stroke="#222" stroke-width="0.9" fill="none"/>
<g transform="translate(60,38.5)">
<rect x="0" y="0" width="6" height="7" fill="#ddd"/><path d="M0.4,0 V7 H6" stroke="#333" stroke-width="0.7" fill="none"/><path d="M1,2 Q3,0.5 6,2" stroke="#6f6fd8" stroke-width="0.8" fill="none"/><path d="M1,4 Q3,5 6,4" stroke="#e04040" stroke-width="0.8" fill="none"/><path d="M1,6 Q3,5.5 6,6" stroke="#303090" stroke-width="0.8" fill="none"/>
</g>
<g transform="translate(116,38.5)">
<rect x="0" y="0" width="6" height="7" fill="#ddd"/><path d="M0.4,0 V7 H6" stroke="#333" stroke-width="0.7" fill="none"/><path d="M1,2 Q3,0.5 6,2" stroke="#6f6fd8" stroke-width="0.8" fill="none"/><path d="M1,4 Q3,5 6,4" stroke="#e04040" stroke-width="0.8" fill="none"/><path d="M1,6 Q3,5.5 6,6" stroke="#303090" stroke-width="0.8" fill="none"/>
</g>
<path d="M153,42.5 H155 L157.7,39.5 M155,42.5 L157.7,45.3" stroke="#222" stroke-width="0.9" fill="none"/>
<!-- child title icons -->
<g transform="translate(6,54)">
<rect x="0" y="0" width="8.5" height="8.5" fill="#dcdcdc"/><path d="M0.5,0 V8.5 H8.5" stroke="#333" stroke-width="0.9" fill="none"/><path d="M1,2.5 Q3,0 4.5,2.5 T8.5,2.5" stroke="#7a7ae0" stroke-width="1" fill="none"/><path d="M1,4.5 Q3,6 4.5,4.5 T8.5,4.5" stroke="#f05050" stroke-width="1" fill="none"/><path d="M1,7.5 Q2.5,6 4,7.5 T8.5,7.5" stroke="#303080" stroke-width="1" fill="none"/>
</g>
<g transform="translate(517,54)">
<rect x="0" y="0" width="8.5" height="8.5" fill="#dcdcdc"/><path d="M0.5,0 V8.5 H8.5" stroke="#333" stroke-width="0.9" fill="none"/><path d="M1,2.5 Q3,0 4.5,2.5 T8.5,2.5" stroke="#7a7ae0" stroke-width="1" fill="none"/><path d="M1,4.5 Q3,6 4.5,4.5 T8.5,4.5" stroke="#f05050" stroke-width="1" fill="none"/><path d="M1,7.5 Q2.5,6 4,7.5 T8.5,7.5" stroke="#303080" stroke-width="1" fill="none"/>
</g>
<path d="M6,292.5 H9 L12,288.3 M9,292.5 L11.8,296" stroke="#3a3a3a" stroke-width="1.1" fill="none"/>
<path d="M517,292.5 H520 L523,288.3 M520,292.5 L522.8,296" stroke="#2a2a2a" stroke-width="1.1" fill="none"/>
<!-- child button glyphs -->
<g stroke="#fff" stroke-width="1.6" fill="none">
</g>
</svg>
<svg class="ov" width="1024" height="527" style="z-index:6"><rect x="458" y="57.3" width="7" height="2.6" rx="0.8" fill="#f4f6f8" stroke="#a8b0b8" stroke-width="0.7"/><rect x="477.3" y="55.8" width="5.6" height="5.4" rx="0.8" fill="none" stroke="#a8b0b8" stroke-width="2.4"/><rect x="477.3" y="55.8" width="5.6" height="5.4" rx="0.8" fill="none" stroke="#f4f6f8" stroke-width="1.2"/><path d="M495.5,56 L501.5,61 M501.5,56 L495.5,61" stroke="#a8b0b8" stroke-width="2.6"/><path d="M495.5,56 L501.5,61 M501.5,56 L495.5,61" stroke="#f4f6f8" stroke-width="1.4"/><rect x="969" y="57.3" width="7" height="2.6" rx="0.8" fill="#f4f6f8" stroke="#a8b0b8" stroke-width="0.7"/><rect x="988.3" y="55.8" width="5.6" height="5.4" rx="0.8" fill="none" stroke="#a8b0b8" stroke-width="2.4"/><rect x="988.3" y="55.8" width="5.6" height="5.4" rx="0.8" fill="none" stroke="#f4f6f8" stroke-width="1.2"/><path d="M1006.5,56 L1012.5,61 M1012.5,56 L1006.5,61" stroke="#a8b0b8" stroke-width="2.6"/><path d="M1006.5,56 L1012.5,61 M1012.5,56 L1006.5,61" stroke="#f4f6f8" stroke-width="1.4"/><rect x="458" y="291.3" width="7" height="2.6" rx="0.8" fill="#f4f6f8" stroke="#a8b0b8" stroke-width="0.7"/><rect x="477.3" y="289.8" width="5.6" height="5.4" rx="0.8" fill="none" stroke="#a8b0b8" stroke-width="2.4"/><rect x="477.3" y="289.8" width="5.6" height="5.4" rx="0.8" fill="none" stroke="#f4f6f8" stroke-width="1.2"/><path d="M495.5,290 L501.5,295 M501.5,290 L495.5,295" stroke="#a8b0b8" stroke-width="2.6"/><path d="M495.5,290 L501.5,295 M501.5,290 L495.5,295" stroke="#f4f6f8" stroke-width="1.4"/><rect x="969" y="291.3" width="7" height="2.6" rx="0.8" fill="#ffffff" stroke="#5a6a7a" stroke-width="0.7"/><rect x="988.3" y="289.8" width="5.6" height="5.4" rx="0.8" fill="none" stroke="#5a6a7a" stroke-width="2.4"/><rect x="988.3" y="289.8" width="5.6" height="5.4" rx="0.8" fill="none" stroke="#ffffff" stroke-width="1.2"/><path d="M1006.5,290 L1012.5,295 M1012.5,290 L1006.5,295" stroke="#5a6a7a" stroke-width="2.6"/><path d="M1006.5,290 L1012.5,295 M1012.5,290 L1006.5,295" stroke="#ffffff" stroke-width="1.4"/></svg>
</body></html>
